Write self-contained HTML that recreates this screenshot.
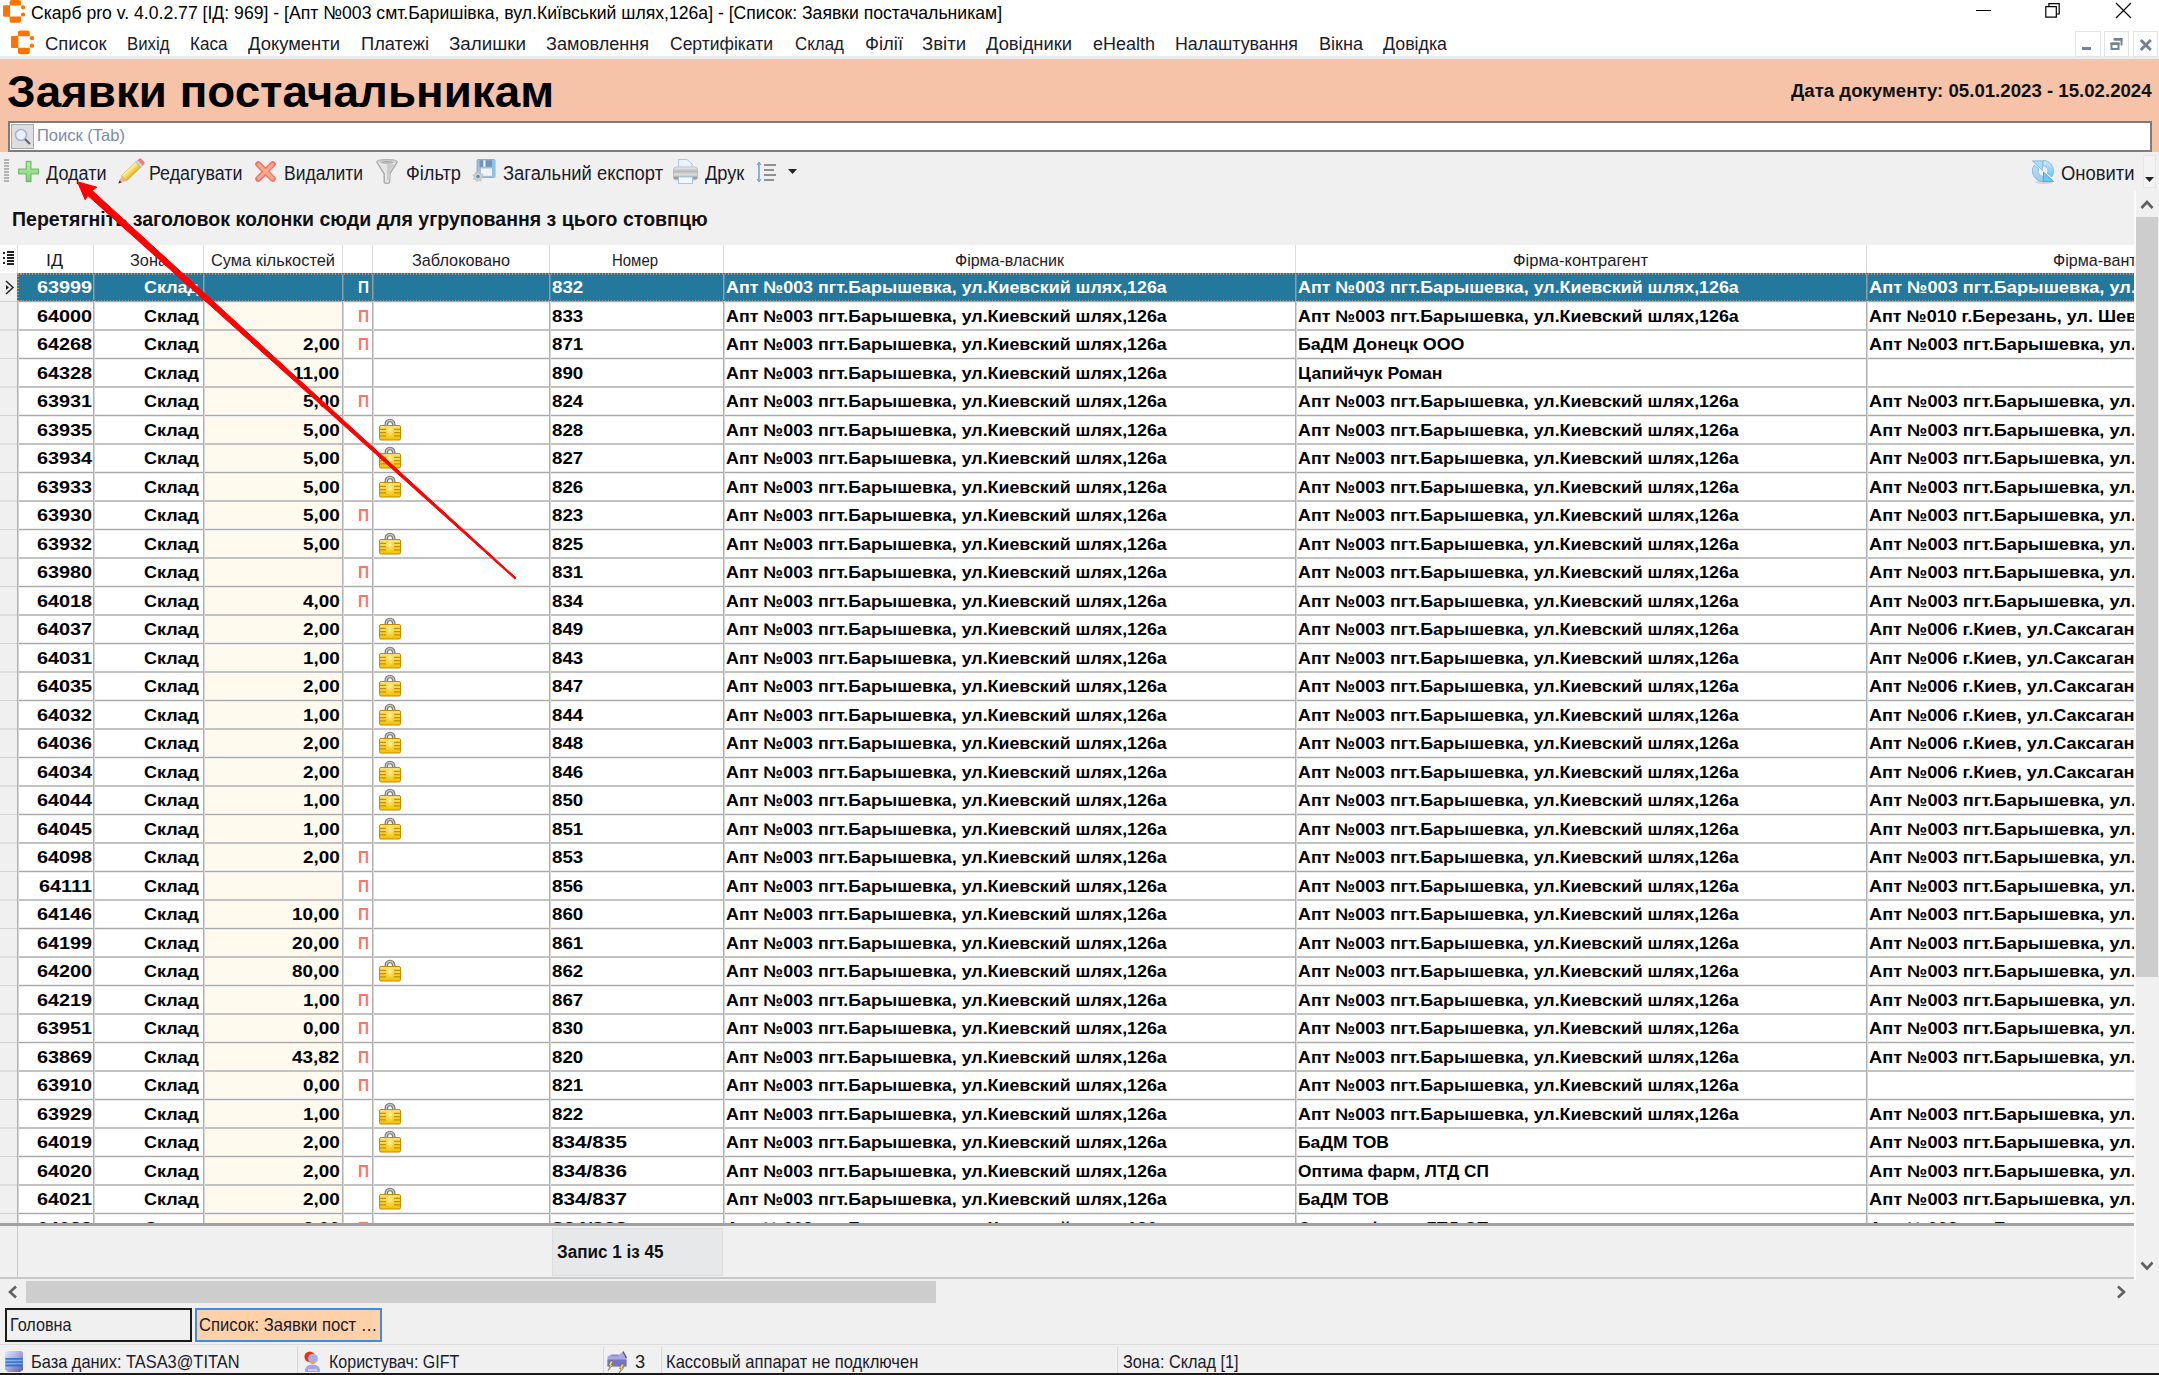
<!DOCTYPE html>
<html><head><meta charset="utf-8"><style>
html,body{margin:0;padding:0;width:2159px;height:1375px;overflow:hidden;background:#f0f0f0;position:relative}
.r{position:absolute}
.t{position:absolute;white-space:pre;line-height:0;transform-origin:0 0;font-family:"Liberation Sans",sans-serif;color:#000}
</style></head><body>
<div class="r" style="left:0px;top:0px;width:2159px;height:28px;background:#fff;"></div><svg class="r" style="left:3px;top:0px" width="22" height="23" viewBox="0 0 22 23">
<path fill="#ff7300" d="M9 0h7c1.4 0 2 .8 2 2.2v3.4H6.6V2.2C6.6.8 7.4 0 9 0zM1.2 5.2h5.8v11.6H1.2C.5 16.8 0 16.3 0 15.6V6.4c0-.7.5-1.2 1.2-1.2zM6.6 16.6H18v3.8c0 1.5-.7 2.4-2.2 2.4H8.8c-1.5 0-2.2-.9-2.2-2.4z"/>
<circle fill="#ff7300" cx="20" cy="7.3" r="2.1"/><circle fill="#ff7300" cx="20" cy="14.5" r="2.1"/></svg><div class="t" style="left:30.50px;top:13.45px;font-size:18.9px;transform:scaleX(0.9324);">Скарб pro v. 4.0.2.77 [ІД: 969] - [Апт №003 смт.Баришівка, вул.Київський шлях,126а] - [Список: Заявки постачальникам]</div><div class="r" style="left:1976px;top:10px;width:15px;height:1.2px;background:#000;"></div><svg class="r" style="left:2043px;top:1px" width="20" height="20"><path d="M2.8 5.6h10.5v10.5h-10.5z M5.9 5.6v-2.9h10.3v10.3h-2.9" fill="none" stroke="#000" stroke-width="1.2"/></svg><svg class="r" style="left:2114px;top:1px" width="20" height="20"><path d="M2 2L17 17M17 2L2 17" stroke="#000" stroke-width="1.2"/></svg><div class="r" style="left:0px;top:28px;width:2159px;height:29px;background:#fff;"></div><svg class="r" style="left:11px;top:30px" width="23" height="25" viewBox="0 0 22 23">
<path fill="#ff7300" d="M9 0h7c1.4 0 2 .8 2 2.2v3.4H6.6V2.2C6.6.8 7.4 0 9 0zM1.2 5.2h5.8v11.6H1.2C.5 16.8 0 16.3 0 15.6V6.4c0-.7.5-1.2 1.2-1.2zM6.6 16.6H18v3.8c0 1.5-.7 2.4-2.2 2.4H8.8c-1.5 0-2.2-.9-2.2-2.4z"/>
<circle fill="#ff7300" cx="20" cy="7.3" r="2.1"/><circle fill="#ff7300" cx="20" cy="14.5" r="2.1"/></svg><div class="t" style="left:44.50px;top:44.45px;font-size:18.9px;color:#1b1b2b;transform:scaleX(0.9784);">Список</div><div class="t" style="left:127.00px;top:44.45px;font-size:18.9px;color:#1b1b2b;transform:scaleX(0.8886);">Вихід</div><div class="t" style="left:190.00px;top:44.45px;font-size:18.9px;color:#1b1b2b;transform:scaleX(0.9043);">Каса</div><div class="t" style="left:248.00px;top:44.45px;font-size:18.9px;color:#1b1b2b;transform:scaleX(0.9750);">Документи</div><div class="t" style="left:361.00px;top:44.45px;font-size:18.9px;color:#1b1b2b;transform:scaleX(0.9678);">Платежі</div><div class="t" style="left:449.00px;top:44.45px;font-size:18.9px;color:#1b1b2b;transform:scaleX(0.9939);">Залишки</div><div class="t" style="left:546.00px;top:44.45px;font-size:18.9px;color:#1b1b2b;transform:scaleX(0.9569);">Замовлення</div><div class="t" style="left:670.00px;top:44.45px;font-size:18.9px;color:#1b1b2b;transform:scaleX(0.9265);">Сертифікати</div><div class="t" style="left:795.00px;top:44.45px;font-size:18.9px;color:#1b1b2b;transform:scaleX(0.8963);">Склад</div><div class="t" style="left:865.00px;top:44.45px;font-size:18.9px;color:#1b1b2b;transform:scaleX(0.9736);">Філії</div><div class="t" style="left:922.00px;top:44.45px;font-size:18.9px;color:#1b1b2b;transform:scaleX(0.9808);">Звіти</div><div class="t" style="left:986.00px;top:44.45px;font-size:18.9px;color:#1b1b2b;transform:scaleX(0.9709);">Довідники</div><div class="t" style="left:1093.00px;top:44.45px;font-size:18.9px;color:#1b1b2b;transform:scaleX(0.9520);">eHealth</div><div class="t" style="left:1175.00px;top:44.45px;font-size:18.9px;color:#1b1b2b;transform:scaleX(0.9420);">Налаштування</div><div class="t" style="left:1319.00px;top:44.45px;font-size:18.9px;color:#1b1b2b;transform:scaleX(0.9565);">Вікна</div><div class="t" style="left:1383.00px;top:44.45px;font-size:18.9px;color:#1b1b2b;transform:scaleX(0.9418);">Довідка</div><div class="r" style="left:0px;top:56px;width:2159px;height:3px;background:#ececec;"></div><div class="r" style="left:2075px;top:31px;width:25.5px;height:26px;background:#fff;border:1.5px solid #e4e4e4;box-sizing:border-box;"></div><div class="r" style="left:2103.5px;top:31px;width:25.5px;height:26px;background:#fff;border:1.5px solid #e4e4e4;box-sizing:border-box;"></div><div class="r" style="left:2132.5px;top:31px;width:25.5px;height:26px;background:#fff;border:1.5px solid #e4e4e4;box-sizing:border-box;"></div><div class="r" style="left:2082px;top:47px;width:9px;height:3px;background:#758391;"></div><svg class="r" style="left:2108px;top:36px" width="18" height="18"><path d="M3.5 7.5h7v5.5h-7z" fill="none" stroke="#758391" stroke-width="2"/><rect x="2.5" y="6.5" width="9" height="2.5" fill="#758391"/><path d="M6.5 3.5h7v6" fill="none" stroke="#758391" stroke-width="2"/><rect x="5.5" y="2" width="9" height="2.5" fill="#758391"/></svg><svg class="r" style="left:2137px;top:36px" width="18" height="18"><path d="M4.8 5L12.8 13M12.8 5L4.8 13" stroke="#758391" stroke-width="3" stroke-linecap="square"/></svg><div class="r" style="left:0px;top:59px;width:2159px;height:93px;background:#f6c2a8;"></div><div class="t" style="left:7.00px;top:91.64px;font-size:44.33px;font-weight:bold;transform:scaleX(1.0322);">Заявки постачальникам</div><div class="t" style="left:1791.40px;top:90.96px;font-size:17.44px;font-weight:bold;color:#111;transform:scaleX(1.0688);">Дата документу: 05.01.2023 - 15.02.2024</div><div class="r" style="left:8px;top:121px;width:2144px;height:31px;background:#fff;border:2px solid #7c7c7c;box-sizing:border-box;"></div><div class="r" style="left:11px;top:124px;width:23px;height:25px;background:#dedede;border:1px solid #a9a9a9;box-sizing:border-box;"></div><svg class="r" style="left:12px;top:126px" width="22" height="22"><circle cx="9" cy="9" r="5.5" fill="#e8f0ff" stroke="#a8b4c8" stroke-width="1.6"/><path d="M13 13l5 5" stroke="#6a6a6a" stroke-width="2.2"/></svg><div class="t" style="left:37.00px;top:136.21px;font-size:16.72px;color:#7d89a8;transform:scaleX(0.9889);">Поиск (Tab)</div><div class="r" style="left:0px;top:152px;width:2159px;height:1223px;background:#f0f0f0;"></div><div class="r" style="left:4px;top:159px;width:5px;height:1.6px;background:#b4b4b4;"></div><div class="r" style="left:4px;top:162px;width:5px;height:1.6px;background:#b4b4b4;"></div><div class="r" style="left:4px;top:165px;width:5px;height:1.6px;background:#b4b4b4;"></div><div class="r" style="left:4px;top:168px;width:5px;height:1.6px;background:#b4b4b4;"></div><div class="r" style="left:4px;top:171px;width:5px;height:1.6px;background:#b4b4b4;"></div><div class="r" style="left:4px;top:174px;width:5px;height:1.6px;background:#b4b4b4;"></div><div class="r" style="left:4px;top:177px;width:5px;height:1.6px;background:#b4b4b4;"></div><div class="r" style="left:4px;top:180px;width:5px;height:1.6px;background:#b4b4b4;"></div><svg class="r" style="left:17px;top:160px" width="23" height="23"><defs><linearGradient id="pg" x1="0" y1="0" x2="0" y2="1"><stop offset="0" stop-color="#b0f2aa"/><stop offset="1" stop-color="#86cc7e"/></linearGradient></defs><path d="M9.3 1.5h4.6v7.7h7.6v4.6h-7.6v7.7h-4.6v-7.7h-7.7v-4.6h7.7z" fill="url(#pg)" stroke="#74bd6c" stroke-width="1.3" stroke-linejoin="round"/></svg><div class="t" style="left:46.40px;top:173.35px;font-size:19.77px;color:#1b1b2b;transform:scaleX(0.9132);">Додати</div><svg class="r" style="left:112px;top:154px" width="36" height="36"><defs><linearGradient id="pb" x1="0" y1="0" x2="0" y2="1"><stop offset="0" stop-color="#fff8c0"/><stop offset=".45" stop-color="#fbdc55"/><stop offset="1" stop-color="#d8b038"/></linearGradient></defs><g transform="translate(6.3 29.6) rotate(-43.5)"><path d="M0 0L8 -3.7V3.7Z" fill="#f2b496"/><path d="M0 0L3.2 -1.5V1.5Z" fill="#3a3a3a"/><rect x="8" y="-3.7" width="19.5" height="7.4" fill="url(#pb)" stroke="#caa43a" stroke-width=".6"/><rect x="27.5" y="-3.7" width="2.8" height="7.4" fill="#d4d4d4" stroke="#a8a8a8" stroke-width=".5"/><path d="M30.3 -3.7h1.7a1.8 1.8 0 0 1 1.8 1.8v3.8a1.8 1.8 0 0 1-1.8 1.8h-1.7z" fill="#ee7c7c"/></g></svg><div class="t" style="left:148.90px;top:173.35px;font-size:19.77px;color:#1b1b2b;transform:scaleX(0.9031);">Редагувати</div><svg class="r" style="left:254px;top:160px" width="23" height="23"><path d="M4.2 4.2L18.8 18.8M18.8 4.2L4.2 18.8" stroke="#ec7864" stroke-width="6" stroke-linecap="round"/><path d="M4.6 4.6L18.4 18.4M18.4 4.6L4.6 18.4" stroke="#faa690" stroke-width="3" stroke-linecap="round"/></svg><div class="t" style="left:283.80px;top:173.35px;font-size:19.77px;color:#1b1b2b;transform:scaleX(0.8846);">Видалити</div><svg class="r" style="left:374px;top:157px" width="26" height="28"><path d="M2.8 5 Q3 2.6 13 2.6 Q23 2.6 23.2 5 L15.8 16.8 V24.5 Q15.6 26.3 13 26.3 Q10.2 26.3 10.2 25 V16.8 Z" fill="#e6e6e6" stroke="#a4a4a4" stroke-width="1.3" stroke-linejoin="round"/><path d="M13 7 L20.5 7.2 L15.8 15.5 V23 H13 Z" fill="#cccccc"/><ellipse cx="13" cy="5.3" rx="7" ry="1.3" fill="#9c9c9c"/><ellipse cx="13" cy="4.2" rx="9.5" ry="1.2" fill="none" stroke="#c8c8c8" stroke-width=".8"/></svg><div class="t" style="left:405.70px;top:173.35px;font-size:19.77px;color:#1b1b2b;transform:scaleX(0.9203);">Фільтр</div><svg class="r" style="left:470px;top:156px" width="28" height="28"><rect x="7" y="3.5" width="18" height="18" rx="1" fill="#a4bcd6" stroke="#8aa2c0" stroke-width=".8"/><rect x="9.5" y="4.3" width="12.5" height="6.5" fill="#6f95bd"/><rect x="13.3" y="4.3" width="2.2" height="6.5" fill="#f0f2f6"/><rect x="11" y="12.4" width="11" height="7.4" fill="#f2f2f2"/><rect x="22.3" y="4" width="2.6" height="17" fill="#88c6e6"/><g transform="translate(8 20.5)"><circle r="3.9" fill="#cdd1d5" stroke="#b0b6bc" stroke-width=".6"/><circle r="4.6" fill="none" stroke="#c4c9ce" stroke-width="1.8" stroke-dasharray="1.9 1.7"/><circle r="1.8" fill="#5f8db5"/></g></svg><div class="t" style="left:502.50px;top:173.35px;font-size:19.77px;color:#1b1b2b;transform:scaleX(0.9304);">Загальний експорт</div><svg class="r" style="left:672px;top:158px" width="27" height="27"><defs><linearGradient id="prg" x1="0" y1="0" x2="0" y2="1"><stop offset="0" stop-color="#f0f0f0"/><stop offset=".35" stop-color="#b8b8b8"/><stop offset=".6" stop-color="#e0e0e0"/><stop offset=".85" stop-color="#909090"/><stop offset="1" stop-color="#d0d0d0"/></linearGradient></defs><path d="M6.5 1.5h8.5l5 4.5v5h-13.5z" fill="#eaf4ff" stroke="#a6c6ee" stroke-width="1"/><rect x="1.5" y="9" width="24" height="13" rx="3" fill="url(#prg)" stroke="#b4b4b4" stroke-width=".8"/><rect x="6.5" y="19" width="14" height="6.5" fill="#f4f9ff" stroke="#a6c6ee" stroke-width="1"/></svg><div class="t" style="left:704.70px;top:173.35px;font-size:19.77px;color:#1b1b2b;transform:scaleX(0.9206);">Друк</div><svg class="r" style="left:756px;top:161px" width="21" height="22"><path d="M3 2v18" stroke="#6a9ad8" stroke-width="1.5"/><path d="M1 4l2-3 2 3M1 18l2 3 2-3" fill="none" stroke="#6a9ad8"/><path d="M8 4h12M8 9h10M8 14h12M8 19h10" stroke="#707070" stroke-width="1.5"/></svg><svg class="r" style="left:788px;top:169px" width="10" height="6"><path d="M0 0h9l-4.5 5z" fill="#222"/></svg><svg class="r" style="left:2030px;top:158px" width="26" height="27"><defs><linearGradient id="rg1" x1="0" y1="0" x2="0" y2="1"><stop offset="0" stop-color="#b4e2fc"/><stop offset="1" stop-color="#9ccbef"/></linearGradient><linearGradient id="rg2" x1="0" y1="0" x2="0" y2="1"><stop offset="0" stop-color="#d4e8f6"/><stop offset="1" stop-color="#62c4f6"/></linearGradient></defs><ellipse cx="14" cy="24.3" rx="9" ry="1.6" fill="#c8c8c8" opacity=".7"/><path d="M13 23.6A10.6 10.6 0 0 1 4.2 7.2L8.6 10.6A5.4 5.4 0 0 0 13 18.4Z" fill="url(#rg1)" stroke="#86b4e0" stroke-width=".9"/><path d="M2.3 2.9H12.7V12.4Z" fill="#aadcfb" stroke="#86b4e0" stroke-width=".9" stroke-linejoin="round"/><path d="M13 2.4A10.6 10.6 0 0 1 21.8 18.8L17.4 15.4A5.4 5.4 0 0 0 13 7.6Z" fill="url(#rg2)" stroke="#8ab8e0" stroke-width=".9"/><path d="M13.5 14V23.6H23.7Z" fill="#66c8f8" stroke="#6a9ccc" stroke-width=".9" stroke-linejoin="round"/></svg><div class="t" style="left:2060.50px;top:173.35px;font-size:19.77px;color:#1b1b2b;transform:scaleX(0.9313);">Оновити</div><div class="r" style="left:2143px;top:155px;width:13px;height:33px;background:#f3f3f3;border:1px solid #e6e6e6;box-sizing:border-box;"></div><svg class="r" style="left:2145px;top:177px" width="10" height="6"><path d="M0 0h9l-4.5 5z" fill="#222"/></svg><div class="t" style="left:12.40px;top:218.95px;font-size:20.35px;font-weight:bold;color:#111;transform:scaleX(0.9604);">Перетягніть заголовок колонки сюди для угруповання з цього стовпцю</div><div class="r" style="left:0px;top:245px;width:2134px;height:979px;background:#fff;"></div><div class="r" style="left:204px;top:273px;width:138px;height:951px;background:#fff9ee;"></div><div class="r" style="left:0px;top:245px;width:17px;height:979px;background:#f0f0f0;"></div><div class="r" style="left:0px;top:245px;width:17px;height:28px;background:#fff;"></div><div class="r" style="left:0;top:245px;width:2134px;height:979px;overflow:hidden"><div class="r" style="left:0;top:-245px;width:2159px;height:1375px"><div class="r" style="left:18px;top:301px;width:2116px;height:1px;background:#a8a8a8;"></div><div class="r" style="left:18px;top:300px;width:2116px;height:1px;background:#ececec;"></div><div class="r" style="left:18px;top:302px;width:2116px;height:1px;background:#ececec;"></div><div class="r" style="left:0px;top:301px;width:17px;height:1px;background:#d4d4d4;"></div><div class="r" style="left:18px;top:329px;width:2116px;height:2px;background:#c2c2c2;"></div><div class="r" style="left:0px;top:329px;width:17px;height:2px;background:#dedede;"></div><div class="r" style="left:18px;top:358px;width:2116px;height:1px;background:#a8a8a8;"></div><div class="r" style="left:18px;top:357px;width:2116px;height:1px;background:#ececec;"></div><div class="r" style="left:18px;top:359px;width:2116px;height:1px;background:#ececec;"></div><div class="r" style="left:0px;top:358px;width:17px;height:1px;background:#d4d4d4;"></div><div class="r" style="left:18px;top:386px;width:2116px;height:2px;background:#c2c2c2;"></div><div class="r" style="left:0px;top:386px;width:17px;height:2px;background:#dedede;"></div><div class="r" style="left:18px;top:415px;width:2116px;height:1px;background:#a8a8a8;"></div><div class="r" style="left:18px;top:414px;width:2116px;height:1px;background:#ececec;"></div><div class="r" style="left:18px;top:416px;width:2116px;height:1px;background:#ececec;"></div><div class="r" style="left:0px;top:415px;width:17px;height:1px;background:#d4d4d4;"></div><div class="r" style="left:18px;top:443px;width:2116px;height:2px;background:#c2c2c2;"></div><div class="r" style="left:0px;top:443px;width:17px;height:2px;background:#dedede;"></div><div class="r" style="left:18px;top:472px;width:2116px;height:1px;background:#a8a8a8;"></div><div class="r" style="left:18px;top:471px;width:2116px;height:1px;background:#ececec;"></div><div class="r" style="left:18px;top:473px;width:2116px;height:1px;background:#ececec;"></div><div class="r" style="left:0px;top:472px;width:17px;height:1px;background:#d4d4d4;"></div><div class="r" style="left:18px;top:500px;width:2116px;height:2px;background:#c2c2c2;"></div><div class="r" style="left:0px;top:500px;width:17px;height:2px;background:#dedede;"></div><div class="r" style="left:18px;top:529px;width:2116px;height:1px;background:#a8a8a8;"></div><div class="r" style="left:18px;top:528px;width:2116px;height:1px;background:#ececec;"></div><div class="r" style="left:18px;top:530px;width:2116px;height:1px;background:#ececec;"></div><div class="r" style="left:0px;top:529px;width:17px;height:1px;background:#d4d4d4;"></div><div class="r" style="left:18px;top:557px;width:2116px;height:2px;background:#c2c2c2;"></div><div class="r" style="left:0px;top:557px;width:17px;height:2px;background:#dedede;"></div><div class="r" style="left:18px;top:586px;width:2116px;height:1px;background:#a8a8a8;"></div><div class="r" style="left:18px;top:585px;width:2116px;height:1px;background:#ececec;"></div><div class="r" style="left:18px;top:587px;width:2116px;height:1px;background:#ececec;"></div><div class="r" style="left:0px;top:586px;width:17px;height:1px;background:#d4d4d4;"></div><div class="r" style="left:18px;top:614px;width:2116px;height:2px;background:#c2c2c2;"></div><div class="r" style="left:0px;top:614px;width:17px;height:2px;background:#dedede;"></div><div class="r" style="left:18px;top:643px;width:2116px;height:1px;background:#a8a8a8;"></div><div class="r" style="left:18px;top:642px;width:2116px;height:1px;background:#ececec;"></div><div class="r" style="left:18px;top:644px;width:2116px;height:1px;background:#ececec;"></div><div class="r" style="left:0px;top:643px;width:17px;height:1px;background:#d4d4d4;"></div><div class="r" style="left:18px;top:671px;width:2116px;height:2px;background:#c2c2c2;"></div><div class="r" style="left:0px;top:671px;width:17px;height:2px;background:#dedede;"></div><div class="r" style="left:18px;top:700px;width:2116px;height:1px;background:#a8a8a8;"></div><div class="r" style="left:18px;top:699px;width:2116px;height:1px;background:#ececec;"></div><div class="r" style="left:18px;top:701px;width:2116px;height:1px;background:#ececec;"></div><div class="r" style="left:0px;top:700px;width:17px;height:1px;background:#d4d4d4;"></div><div class="r" style="left:18px;top:728px;width:2116px;height:2px;background:#c2c2c2;"></div><div class="r" style="left:0px;top:728px;width:17px;height:2px;background:#dedede;"></div><div class="r" style="left:18px;top:757px;width:2116px;height:1px;background:#a8a8a8;"></div><div class="r" style="left:18px;top:756px;width:2116px;height:1px;background:#ececec;"></div><div class="r" style="left:18px;top:758px;width:2116px;height:1px;background:#ececec;"></div><div class="r" style="left:0px;top:757px;width:17px;height:1px;background:#d4d4d4;"></div><div class="r" style="left:18px;top:785px;width:2116px;height:2px;background:#c2c2c2;"></div><div class="r" style="left:0px;top:785px;width:17px;height:2px;background:#dedede;"></div><div class="r" style="left:18px;top:814px;width:2116px;height:1px;background:#a8a8a8;"></div><div class="r" style="left:18px;top:813px;width:2116px;height:1px;background:#ececec;"></div><div class="r" style="left:18px;top:815px;width:2116px;height:1px;background:#ececec;"></div><div class="r" style="left:0px;top:814px;width:17px;height:1px;background:#d4d4d4;"></div><div class="r" style="left:18px;top:842px;width:2116px;height:2px;background:#c2c2c2;"></div><div class="r" style="left:0px;top:842px;width:17px;height:2px;background:#dedede;"></div><div class="r" style="left:18px;top:871px;width:2116px;height:1px;background:#a8a8a8;"></div><div class="r" style="left:18px;top:870px;width:2116px;height:1px;background:#ececec;"></div><div class="r" style="left:18px;top:872px;width:2116px;height:1px;background:#ececec;"></div><div class="r" style="left:0px;top:871px;width:17px;height:1px;background:#d4d4d4;"></div><div class="r" style="left:18px;top:899px;width:2116px;height:2px;background:#c2c2c2;"></div><div class="r" style="left:0px;top:899px;width:17px;height:2px;background:#dedede;"></div><div class="r" style="left:18px;top:928px;width:2116px;height:1px;background:#a8a8a8;"></div><div class="r" style="left:18px;top:927px;width:2116px;height:1px;background:#ececec;"></div><div class="r" style="left:18px;top:929px;width:2116px;height:1px;background:#ececec;"></div><div class="r" style="left:0px;top:928px;width:17px;height:1px;background:#d4d4d4;"></div><div class="r" style="left:18px;top:956px;width:2116px;height:2px;background:#c2c2c2;"></div><div class="r" style="left:0px;top:956px;width:17px;height:2px;background:#dedede;"></div><div class="r" style="left:18px;top:985px;width:2116px;height:1px;background:#a8a8a8;"></div><div class="r" style="left:18px;top:984px;width:2116px;height:1px;background:#ececec;"></div><div class="r" style="left:18px;top:986px;width:2116px;height:1px;background:#ececec;"></div><div class="r" style="left:0px;top:985px;width:17px;height:1px;background:#d4d4d4;"></div><div class="r" style="left:18px;top:1013px;width:2116px;height:2px;background:#c2c2c2;"></div><div class="r" style="left:0px;top:1013px;width:17px;height:2px;background:#dedede;"></div><div class="r" style="left:18px;top:1042px;width:2116px;height:1px;background:#a8a8a8;"></div><div class="r" style="left:18px;top:1041px;width:2116px;height:1px;background:#ececec;"></div><div class="r" style="left:18px;top:1043px;width:2116px;height:1px;background:#ececec;"></div><div class="r" style="left:0px;top:1042px;width:17px;height:1px;background:#d4d4d4;"></div><div class="r" style="left:18px;top:1070px;width:2116px;height:2px;background:#c2c2c2;"></div><div class="r" style="left:0px;top:1070px;width:17px;height:2px;background:#dedede;"></div><div class="r" style="left:18px;top:1099px;width:2116px;height:1px;background:#a8a8a8;"></div><div class="r" style="left:18px;top:1098px;width:2116px;height:1px;background:#ececec;"></div><div class="r" style="left:18px;top:1100px;width:2116px;height:1px;background:#ececec;"></div><div class="r" style="left:0px;top:1099px;width:17px;height:1px;background:#d4d4d4;"></div><div class="r" style="left:18px;top:1127px;width:2116px;height:2px;background:#c2c2c2;"></div><div class="r" style="left:0px;top:1127px;width:17px;height:2px;background:#dedede;"></div><div class="r" style="left:18px;top:1156px;width:2116px;height:1px;background:#a8a8a8;"></div><div class="r" style="left:18px;top:1155px;width:2116px;height:1px;background:#ececec;"></div><div class="r" style="left:18px;top:1157px;width:2116px;height:1px;background:#ececec;"></div><div class="r" style="left:0px;top:1156px;width:17px;height:1px;background:#d4d4d4;"></div><div class="r" style="left:18px;top:1184px;width:2116px;height:2px;background:#c2c2c2;"></div><div class="r" style="left:0px;top:1184px;width:17px;height:2px;background:#dedede;"></div><div class="r" style="left:18px;top:1213px;width:2116px;height:1px;background:#a8a8a8;"></div><div class="r" style="left:18px;top:1212px;width:2116px;height:1px;background:#ececec;"></div><div class="r" style="left:18px;top:1214px;width:2116px;height:1px;background:#ececec;"></div><div class="r" style="left:0px;top:1213px;width:17px;height:1px;background:#d4d4d4;"></div><div class="r" style="left:93px;top:273px;width:1px;height:951px;background:#b0b0b0;"></div><div class="r" style="left:94px;top:273px;width:1px;height:951px;background:#d6d6d6;"></div><div class="r" style="left:203px;top:273px;width:1px;height:951px;background:#b0b0b0;"></div><div class="r" style="left:204px;top:273px;width:1px;height:951px;background:#d6d6d6;"></div><div class="r" style="left:342px;top:273px;width:1px;height:951px;background:#b0b0b0;"></div><div class="r" style="left:343px;top:273px;width:1px;height:951px;background:#d6d6d6;"></div><div class="r" style="left:372px;top:273px;width:1px;height:951px;background:#b0b0b0;"></div><div class="r" style="left:373px;top:273px;width:1px;height:951px;background:#d6d6d6;"></div><div class="r" style="left:549px;top:273px;width:1px;height:951px;background:#b0b0b0;"></div><div class="r" style="left:550px;top:273px;width:1px;height:951px;background:#d6d6d6;"></div><div class="r" style="left:723px;top:273px;width:1px;height:951px;background:#b0b0b0;"></div><div class="r" style="left:724px;top:273px;width:1px;height:951px;background:#d6d6d6;"></div><div class="r" style="left:1295px;top:273px;width:1px;height:951px;background:#b0b0b0;"></div><div class="r" style="left:1296px;top:273px;width:1px;height:951px;background:#d6d6d6;"></div><div class="r" style="left:1866px;top:273px;width:1px;height:951px;background:#b0b0b0;"></div><div class="r" style="left:1867px;top:273px;width:1px;height:951px;background:#d6d6d6;"></div><div class="r" style="left:17px;top:273px;width:1px;height:951px;background:#b0b0b0;"></div><div class="r" style="left:18px;top:273px;width:1px;height:951px;background:#d6d6d6;"></div><div class="r" style="left:17px;top:273px;width:2117px;height:28px;background:#24789c;"></div><div class="r" style="left:93px;top:274px;width:1px;height:26px;background:#8a9ea8;"></div><div class="r" style="left:94px;top:274px;width:1px;height:26px;background:#5a8ca4;"></div><div class="r" style="left:203px;top:274px;width:1px;height:26px;background:#8a9ea8;"></div><div class="r" style="left:204px;top:274px;width:1px;height:26px;background:#5a8ca4;"></div><div class="r" style="left:342px;top:274px;width:1px;height:26px;background:#8a9ea8;"></div><div class="r" style="left:343px;top:274px;width:1px;height:26px;background:#5a8ca4;"></div><div class="r" style="left:372px;top:274px;width:1px;height:26px;background:#8a9ea8;"></div><div class="r" style="left:373px;top:274px;width:1px;height:26px;background:#5a8ca4;"></div><div class="r" style="left:549px;top:274px;width:1px;height:26px;background:#8a9ea8;"></div><div class="r" style="left:550px;top:274px;width:1px;height:26px;background:#5a8ca4;"></div><div class="r" style="left:723px;top:274px;width:1px;height:26px;background:#8a9ea8;"></div><div class="r" style="left:724px;top:274px;width:1px;height:26px;background:#5a8ca4;"></div><div class="r" style="left:1295px;top:274px;width:1px;height:26px;background:#8a9ea8;"></div><div class="r" style="left:1296px;top:274px;width:1px;height:26px;background:#5a8ca4;"></div><div class="r" style="left:1866px;top:274px;width:1px;height:26px;background:#8a9ea8;"></div><div class="r" style="left:1867px;top:274px;width:1px;height:26px;background:#5a8ca4;"></div><div class="r" style="left:17px;top:273px;width:2117px;height:1.5px;background:repeating-linear-gradient(90deg,rgba(225,140,90,.85) 0 1.5px,transparent 1.5px 3px);"></div><div class="r" style="left:17px;top:299.5px;width:2117px;height:1.5px;background:repeating-linear-gradient(90deg,rgba(225,140,90,.85) 0 1.5px,transparent 1.5px 3px);"></div><div class="r" style="left:17px;top:273px;width:1.5px;height:28px;background:repeating-linear-gradient(180deg,rgba(225,140,90,.85) 0 1.5px,transparent 1.5px 3px);"></div><div class="t" style="left:36.88px;top:288.21px;font-size:16.72px;font-weight:bold;color:#fff;transform:scaleX(1.1866);">63999</div><div class="t" style="left:144.02px;top:288.21px;font-size:16.72px;font-weight:bold;color:#fff;transform:scaleX(1.0750);">Склад</div><div class="t" style="left:357.50px;top:288.21px;font-size:16.72px;font-weight:bold;color:#fff;transform:scaleX(0.9155);">П</div><div class="t" style="left:552.20px;top:288.21px;font-size:16.72px;font-weight:bold;color:#fff;transform:scaleX(1.1194);">832</div><div class="t" style="left:726.30px;top:288.21px;font-size:16.72px;font-weight:bold;color:#fff;transform:scaleX(1.0678);">Апт №003 пгт.Барышевка, ул.Киевский шлях,126а</div><div class="t" style="left:1298.00px;top:288.21px;font-size:16.72px;font-weight:bold;color:#fff;transform:scaleX(1.0678);">Апт №003 пгт.Барышевка, ул.Киевский шлях,126а</div><div class="t" style="left:1869.30px;top:288.21px;font-size:16.72px;font-weight:bold;color:#fff;transform:scaleX(1.0898);">Апт №003 пгт.Барышевка, ул.</div><div class="t" style="left:36.88px;top:317.21px;font-size:16.72px;font-weight:bold;transform:scaleX(1.1866);">64000</div><div class="t" style="left:144.02px;top:317.21px;font-size:16.72px;font-weight:bold;transform:scaleX(1.0750);">Склад</div><div class="t" style="left:357.50px;top:317.21px;font-size:16.72px;font-weight:bold;color:#ff7468;transform:scaleX(0.9155);">П</div><div class="t" style="left:552.20px;top:317.21px;font-size:16.72px;font-weight:bold;transform:scaleX(1.1194);">833</div><div class="t" style="left:726.30px;top:317.21px;font-size:16.72px;font-weight:bold;transform:scaleX(1.0678);">Апт №003 пгт.Барышевка, ул.Киевский шлях,126а</div><div class="t" style="left:1298.00px;top:317.21px;font-size:16.72px;font-weight:bold;transform:scaleX(1.0678);">Апт №003 пгт.Барышевка, ул.Киевский шлях,126а</div><div class="t" style="left:1869.30px;top:317.21px;font-size:16.72px;font-weight:bold;transform:scaleX(1.0757);">Апт №010 г.Березань, ул. Шев</div><div class="t" style="left:36.88px;top:345.21px;font-size:16.72px;font-weight:bold;transform:scaleX(1.1866);">64268</div><div class="t" style="left:144.02px;top:345.21px;font-size:16.72px;font-weight:bold;transform:scaleX(1.0750);">Склад</div><div class="t" style="left:302.76px;top:345.21px;font-size:16.72px;font-weight:bold;transform:scaleX(1.1300);">2,00</div><div class="t" style="left:357.50px;top:345.21px;font-size:16.72px;font-weight:bold;color:#ff7468;transform:scaleX(0.9155);">П</div><div class="t" style="left:552.20px;top:345.21px;font-size:16.72px;font-weight:bold;transform:scaleX(1.1194);">871</div><div class="t" style="left:726.30px;top:345.21px;font-size:16.72px;font-weight:bold;transform:scaleX(1.0678);">Апт №003 пгт.Барышевка, ул.Киевский шлях,126а</div><div class="t" style="left:1298.00px;top:345.21px;font-size:16.72px;font-weight:bold;transform:scaleX(1.0695);">БаДМ Донецк ООО</div><div class="t" style="left:1869.30px;top:345.21px;font-size:16.72px;font-weight:bold;transform:scaleX(1.0898);">Апт №003 пгт.Барышевка, ул.</div><div class="t" style="left:36.88px;top:374.21px;font-size:16.72px;font-weight:bold;transform:scaleX(1.1866);">64328</div><div class="t" style="left:144.02px;top:374.21px;font-size:16.72px;font-weight:bold;transform:scaleX(1.0750);">Склад</div><div class="t" style="left:293.29px;top:374.21px;font-size:16.72px;font-weight:bold;transform:scaleX(1.1300);">11,00</div><div class="t" style="left:552.20px;top:374.21px;font-size:16.72px;font-weight:bold;transform:scaleX(1.1194);">890</div><div class="t" style="left:726.30px;top:374.21px;font-size:16.72px;font-weight:bold;transform:scaleX(1.0678);">Апт №003 пгт.Барышевка, ул.Киевский шлях,126а</div><div class="t" style="left:1298.00px;top:374.21px;font-size:16.72px;font-weight:bold;transform:scaleX(1.0551);">Цапийчук Роман</div><div class="t" style="left:36.88px;top:402.21px;font-size:16.72px;font-weight:bold;transform:scaleX(1.1866);">63931</div><div class="t" style="left:144.02px;top:402.21px;font-size:16.72px;font-weight:bold;transform:scaleX(1.0750);">Склад</div><div class="t" style="left:302.76px;top:402.21px;font-size:16.72px;font-weight:bold;transform:scaleX(1.1300);">5,00</div><div class="t" style="left:357.50px;top:402.21px;font-size:16.72px;font-weight:bold;color:#ff7468;transform:scaleX(0.9155);">П</div><div class="t" style="left:552.20px;top:402.21px;font-size:16.72px;font-weight:bold;transform:scaleX(1.1194);">824</div><div class="t" style="left:726.30px;top:402.21px;font-size:16.72px;font-weight:bold;transform:scaleX(1.0678);">Апт №003 пгт.Барышевка, ул.Киевский шлях,126а</div><div class="t" style="left:1298.00px;top:402.21px;font-size:16.72px;font-weight:bold;transform:scaleX(1.0678);">Апт №003 пгт.Барышевка, ул.Киевский шлях,126а</div><div class="t" style="left:1869.30px;top:402.21px;font-size:16.72px;font-weight:bold;transform:scaleX(1.0898);">Апт №003 пгт.Барышевка, ул.</div><div class="t" style="left:36.88px;top:431.21px;font-size:16.72px;font-weight:bold;transform:scaleX(1.1866);">63935</div><div class="t" style="left:144.02px;top:431.21px;font-size:16.72px;font-weight:bold;transform:scaleX(1.0750);">Склад</div><div class="t" style="left:302.76px;top:431.21px;font-size:16.72px;font-weight:bold;transform:scaleX(1.1300);">5,00</div><svg class="r" style="left:379px;top:418px" width="22" height="23" viewBox="0 0 22 23"><defs><linearGradient id="lg" x1="0" y1="0" x2="0" y2="1"><stop offset="0" stop-color="#fbe37a"/><stop offset="1" stop-color="#f2c200"/></linearGradient><radialGradient id="lh" cx=".5" cy=".35" r=".6"><stop offset="0" stop-color="#fff6b8"/><stop offset="1" stop-color="#f4cc20" stop-opacity="0"/></radialGradient></defs><path d="M7.3 9.5V6.2a3.7 3.7 0 0 1 7.4 0V9.5" fill="none" stroke="#7a7a7a" stroke-width="3.6"/><path d="M7.3 9V6.2a3.7 3.7 0 0 1 7.4 0V9" fill="none" stroke="#c4c4c4" stroke-width="1.4"/><rect x="0.5" y="7.5" width="21" height="14.5" rx="1.5" fill="url(#lg)" stroke="#c08c00" stroke-width="1"/><path d="M1 11.3h6M15 11.3h6M1 14.6h6M15 14.6h6M1 17.9h6M15 17.9h6" stroke="#c89000" stroke-width="1.3"/><rect x="6.5" y="8" width="9" height="13.5" fill="url(#lh)"/></svg><div class="t" style="left:552.20px;top:431.21px;font-size:16.72px;font-weight:bold;transform:scaleX(1.1194);">828</div><div class="t" style="left:726.30px;top:431.21px;font-size:16.72px;font-weight:bold;transform:scaleX(1.0678);">Апт №003 пгт.Барышевка, ул.Киевский шлях,126а</div><div class="t" style="left:1298.00px;top:431.21px;font-size:16.72px;font-weight:bold;transform:scaleX(1.0678);">Апт №003 пгт.Барышевка, ул.Киевский шлях,126а</div><div class="t" style="left:1869.30px;top:431.21px;font-size:16.72px;font-weight:bold;transform:scaleX(1.0898);">Апт №003 пгт.Барышевка, ул.</div><div class="t" style="left:36.88px;top:459.21px;font-size:16.72px;font-weight:bold;transform:scaleX(1.1866);">63934</div><div class="t" style="left:144.02px;top:459.21px;font-size:16.72px;font-weight:bold;transform:scaleX(1.0750);">Склад</div><div class="t" style="left:302.76px;top:459.21px;font-size:16.72px;font-weight:bold;transform:scaleX(1.1300);">5,00</div><svg class="r" style="left:379px;top:446px" width="22" height="23" viewBox="0 0 22 23"><defs><linearGradient id="lg" x1="0" y1="0" x2="0" y2="1"><stop offset="0" stop-color="#fbe37a"/><stop offset="1" stop-color="#f2c200"/></linearGradient><radialGradient id="lh" cx=".5" cy=".35" r=".6"><stop offset="0" stop-color="#fff6b8"/><stop offset="1" stop-color="#f4cc20" stop-opacity="0"/></radialGradient></defs><path d="M7.3 9.5V6.2a3.7 3.7 0 0 1 7.4 0V9.5" fill="none" stroke="#7a7a7a" stroke-width="3.6"/><path d="M7.3 9V6.2a3.7 3.7 0 0 1 7.4 0V9" fill="none" stroke="#c4c4c4" stroke-width="1.4"/><rect x="0.5" y="7.5" width="21" height="14.5" rx="1.5" fill="url(#lg)" stroke="#c08c00" stroke-width="1"/><path d="M1 11.3h6M15 11.3h6M1 14.6h6M15 14.6h6M1 17.9h6M15 17.9h6" stroke="#c89000" stroke-width="1.3"/><rect x="6.5" y="8" width="9" height="13.5" fill="url(#lh)"/></svg><div class="t" style="left:552.20px;top:459.21px;font-size:16.72px;font-weight:bold;transform:scaleX(1.1194);">827</div><div class="t" style="left:726.30px;top:459.21px;font-size:16.72px;font-weight:bold;transform:scaleX(1.0678);">Апт №003 пгт.Барышевка, ул.Киевский шлях,126а</div><div class="t" style="left:1298.00px;top:459.21px;font-size:16.72px;font-weight:bold;transform:scaleX(1.0678);">Апт №003 пгт.Барышевка, ул.Киевский шлях,126а</div><div class="t" style="left:1869.30px;top:459.21px;font-size:16.72px;font-weight:bold;transform:scaleX(1.0898);">Апт №003 пгт.Барышевка, ул.</div><div class="t" style="left:36.88px;top:488.21px;font-size:16.72px;font-weight:bold;transform:scaleX(1.1866);">63933</div><div class="t" style="left:144.02px;top:488.21px;font-size:16.72px;font-weight:bold;transform:scaleX(1.0750);">Склад</div><div class="t" style="left:302.76px;top:488.21px;font-size:16.72px;font-weight:bold;transform:scaleX(1.1300);">5,00</div><svg class="r" style="left:379px;top:475px" width="22" height="23" viewBox="0 0 22 23"><defs><linearGradient id="lg" x1="0" y1="0" x2="0" y2="1"><stop offset="0" stop-color="#fbe37a"/><stop offset="1" stop-color="#f2c200"/></linearGradient><radialGradient id="lh" cx=".5" cy=".35" r=".6"><stop offset="0" stop-color="#fff6b8"/><stop offset="1" stop-color="#f4cc20" stop-opacity="0"/></radialGradient></defs><path d="M7.3 9.5V6.2a3.7 3.7 0 0 1 7.4 0V9.5" fill="none" stroke="#7a7a7a" stroke-width="3.6"/><path d="M7.3 9V6.2a3.7 3.7 0 0 1 7.4 0V9" fill="none" stroke="#c4c4c4" stroke-width="1.4"/><rect x="0.5" y="7.5" width="21" height="14.5" rx="1.5" fill="url(#lg)" stroke="#c08c00" stroke-width="1"/><path d="M1 11.3h6M15 11.3h6M1 14.6h6M15 14.6h6M1 17.9h6M15 17.9h6" stroke="#c89000" stroke-width="1.3"/><rect x="6.5" y="8" width="9" height="13.5" fill="url(#lh)"/></svg><div class="t" style="left:552.20px;top:488.21px;font-size:16.72px;font-weight:bold;transform:scaleX(1.1194);">826</div><div class="t" style="left:726.30px;top:488.21px;font-size:16.72px;font-weight:bold;transform:scaleX(1.0678);">Апт №003 пгт.Барышевка, ул.Киевский шлях,126а</div><div class="t" style="left:1298.00px;top:488.21px;font-size:16.72px;font-weight:bold;transform:scaleX(1.0678);">Апт №003 пгт.Барышевка, ул.Киевский шлях,126а</div><div class="t" style="left:1869.30px;top:488.21px;font-size:16.72px;font-weight:bold;transform:scaleX(1.0898);">Апт №003 пгт.Барышевка, ул.</div><div class="t" style="left:36.88px;top:516.21px;font-size:16.72px;font-weight:bold;transform:scaleX(1.1866);">63930</div><div class="t" style="left:144.02px;top:516.21px;font-size:16.72px;font-weight:bold;transform:scaleX(1.0750);">Склад</div><div class="t" style="left:302.76px;top:516.21px;font-size:16.72px;font-weight:bold;transform:scaleX(1.1300);">5,00</div><div class="t" style="left:357.50px;top:516.21px;font-size:16.72px;font-weight:bold;color:#ff7468;transform:scaleX(0.9155);">П</div><div class="t" style="left:552.20px;top:516.21px;font-size:16.72px;font-weight:bold;transform:scaleX(1.1194);">823</div><div class="t" style="left:726.30px;top:516.21px;font-size:16.72px;font-weight:bold;transform:scaleX(1.0678);">Апт №003 пгт.Барышевка, ул.Киевский шлях,126а</div><div class="t" style="left:1298.00px;top:516.21px;font-size:16.72px;font-weight:bold;transform:scaleX(1.0678);">Апт №003 пгт.Барышевка, ул.Киевский шлях,126а</div><div class="t" style="left:1869.30px;top:516.21px;font-size:16.72px;font-weight:bold;transform:scaleX(1.0898);">Апт №003 пгт.Барышевка, ул.</div><div class="t" style="left:36.88px;top:545.21px;font-size:16.72px;font-weight:bold;transform:scaleX(1.1866);">63932</div><div class="t" style="left:144.02px;top:545.21px;font-size:16.72px;font-weight:bold;transform:scaleX(1.0750);">Склад</div><div class="t" style="left:302.76px;top:545.21px;font-size:16.72px;font-weight:bold;transform:scaleX(1.1300);">5,00</div><svg class="r" style="left:379px;top:532px" width="22" height="23" viewBox="0 0 22 23"><defs><linearGradient id="lg" x1="0" y1="0" x2="0" y2="1"><stop offset="0" stop-color="#fbe37a"/><stop offset="1" stop-color="#f2c200"/></linearGradient><radialGradient id="lh" cx=".5" cy=".35" r=".6"><stop offset="0" stop-color="#fff6b8"/><stop offset="1" stop-color="#f4cc20" stop-opacity="0"/></radialGradient></defs><path d="M7.3 9.5V6.2a3.7 3.7 0 0 1 7.4 0V9.5" fill="none" stroke="#7a7a7a" stroke-width="3.6"/><path d="M7.3 9V6.2a3.7 3.7 0 0 1 7.4 0V9" fill="none" stroke="#c4c4c4" stroke-width="1.4"/><rect x="0.5" y="7.5" width="21" height="14.5" rx="1.5" fill="url(#lg)" stroke="#c08c00" stroke-width="1"/><path d="M1 11.3h6M15 11.3h6M1 14.6h6M15 14.6h6M1 17.9h6M15 17.9h6" stroke="#c89000" stroke-width="1.3"/><rect x="6.5" y="8" width="9" height="13.5" fill="url(#lh)"/></svg><div class="t" style="left:552.20px;top:545.21px;font-size:16.72px;font-weight:bold;transform:scaleX(1.1194);">825</div><div class="t" style="left:726.30px;top:545.21px;font-size:16.72px;font-weight:bold;transform:scaleX(1.0678);">Апт №003 пгт.Барышевка, ул.Киевский шлях,126а</div><div class="t" style="left:1298.00px;top:545.21px;font-size:16.72px;font-weight:bold;transform:scaleX(1.0678);">Апт №003 пгт.Барышевка, ул.Киевский шлях,126а</div><div class="t" style="left:1869.30px;top:545.21px;font-size:16.72px;font-weight:bold;transform:scaleX(1.0898);">Апт №003 пгт.Барышевка, ул.</div><div class="t" style="left:36.88px;top:573.21px;font-size:16.72px;font-weight:bold;transform:scaleX(1.1866);">63980</div><div class="t" style="left:144.02px;top:573.21px;font-size:16.72px;font-weight:bold;transform:scaleX(1.0750);">Склад</div><div class="t" style="left:357.50px;top:573.21px;font-size:16.72px;font-weight:bold;color:#ff7468;transform:scaleX(0.9155);">П</div><div class="t" style="left:552.20px;top:573.21px;font-size:16.72px;font-weight:bold;transform:scaleX(1.1194);">831</div><div class="t" style="left:726.30px;top:573.21px;font-size:16.72px;font-weight:bold;transform:scaleX(1.0678);">Апт №003 пгт.Барышевка, ул.Киевский шлях,126а</div><div class="t" style="left:1298.00px;top:573.21px;font-size:16.72px;font-weight:bold;transform:scaleX(1.0678);">Апт №003 пгт.Барышевка, ул.Киевский шлях,126а</div><div class="t" style="left:1869.30px;top:573.21px;font-size:16.72px;font-weight:bold;transform:scaleX(1.0898);">Апт №003 пгт.Барышевка, ул.</div><div class="t" style="left:36.88px;top:602.21px;font-size:16.72px;font-weight:bold;transform:scaleX(1.1866);">64018</div><div class="t" style="left:144.02px;top:602.21px;font-size:16.72px;font-weight:bold;transform:scaleX(1.0750);">Склад</div><div class="t" style="left:302.76px;top:602.21px;font-size:16.72px;font-weight:bold;transform:scaleX(1.1300);">4,00</div><div class="t" style="left:357.50px;top:602.21px;font-size:16.72px;font-weight:bold;color:#ff7468;transform:scaleX(0.9155);">П</div><div class="t" style="left:552.20px;top:602.21px;font-size:16.72px;font-weight:bold;transform:scaleX(1.1194);">834</div><div class="t" style="left:726.30px;top:602.21px;font-size:16.72px;font-weight:bold;transform:scaleX(1.0678);">Апт №003 пгт.Барышевка, ул.Киевский шлях,126а</div><div class="t" style="left:1298.00px;top:602.21px;font-size:16.72px;font-weight:bold;transform:scaleX(1.0678);">Апт №003 пгт.Барышевка, ул.Киевский шлях,126а</div><div class="t" style="left:1869.30px;top:602.21px;font-size:16.72px;font-weight:bold;transform:scaleX(1.0898);">Апт №003 пгт.Барышевка, ул.</div><div class="t" style="left:36.88px;top:630.21px;font-size:16.72px;font-weight:bold;transform:scaleX(1.1866);">64037</div><div class="t" style="left:144.02px;top:630.21px;font-size:16.72px;font-weight:bold;transform:scaleX(1.0750);">Склад</div><div class="t" style="left:302.76px;top:630.21px;font-size:16.72px;font-weight:bold;transform:scaleX(1.1300);">2,00</div><svg class="r" style="left:379px;top:617px" width="22" height="23" viewBox="0 0 22 23"><defs><linearGradient id="lg" x1="0" y1="0" x2="0" y2="1"><stop offset="0" stop-color="#fbe37a"/><stop offset="1" stop-color="#f2c200"/></linearGradient><radialGradient id="lh" cx=".5" cy=".35" r=".6"><stop offset="0" stop-color="#fff6b8"/><stop offset="1" stop-color="#f4cc20" stop-opacity="0"/></radialGradient></defs><path d="M7.3 9.5V6.2a3.7 3.7 0 0 1 7.4 0V9.5" fill="none" stroke="#7a7a7a" stroke-width="3.6"/><path d="M7.3 9V6.2a3.7 3.7 0 0 1 7.4 0V9" fill="none" stroke="#c4c4c4" stroke-width="1.4"/><rect x="0.5" y="7.5" width="21" height="14.5" rx="1.5" fill="url(#lg)" stroke="#c08c00" stroke-width="1"/><path d="M1 11.3h6M15 11.3h6M1 14.6h6M15 14.6h6M1 17.9h6M15 17.9h6" stroke="#c89000" stroke-width="1.3"/><rect x="6.5" y="8" width="9" height="13.5" fill="url(#lh)"/></svg><div class="t" style="left:552.20px;top:630.21px;font-size:16.72px;font-weight:bold;transform:scaleX(1.1194);">849</div><div class="t" style="left:726.30px;top:630.21px;font-size:16.72px;font-weight:bold;transform:scaleX(1.0678);">Апт №003 пгт.Барышевка, ул.Киевский шлях,126а</div><div class="t" style="left:1298.00px;top:630.21px;font-size:16.72px;font-weight:bold;transform:scaleX(1.0678);">Апт №003 пгт.Барышевка, ул.Киевский шлях,126а</div><div class="t" style="left:1869.30px;top:630.21px;font-size:16.72px;font-weight:bold;transform:scaleX(1.0860);">Апт №006 г.Киев, ул.Саксаган</div><div class="t" style="left:36.88px;top:659.21px;font-size:16.72px;font-weight:bold;transform:scaleX(1.1866);">64031</div><div class="t" style="left:144.02px;top:659.21px;font-size:16.72px;font-weight:bold;transform:scaleX(1.0750);">Склад</div><div class="t" style="left:302.76px;top:659.21px;font-size:16.72px;font-weight:bold;transform:scaleX(1.1300);">1,00</div><svg class="r" style="left:379px;top:646px" width="22" height="23" viewBox="0 0 22 23"><defs><linearGradient id="lg" x1="0" y1="0" x2="0" y2="1"><stop offset="0" stop-color="#fbe37a"/><stop offset="1" stop-color="#f2c200"/></linearGradient><radialGradient id="lh" cx=".5" cy=".35" r=".6"><stop offset="0" stop-color="#fff6b8"/><stop offset="1" stop-color="#f4cc20" stop-opacity="0"/></radialGradient></defs><path d="M7.3 9.5V6.2a3.7 3.7 0 0 1 7.4 0V9.5" fill="none" stroke="#7a7a7a" stroke-width="3.6"/><path d="M7.3 9V6.2a3.7 3.7 0 0 1 7.4 0V9" fill="none" stroke="#c4c4c4" stroke-width="1.4"/><rect x="0.5" y="7.5" width="21" height="14.5" rx="1.5" fill="url(#lg)" stroke="#c08c00" stroke-width="1"/><path d="M1 11.3h6M15 11.3h6M1 14.6h6M15 14.6h6M1 17.9h6M15 17.9h6" stroke="#c89000" stroke-width="1.3"/><rect x="6.5" y="8" width="9" height="13.5" fill="url(#lh)"/></svg><div class="t" style="left:552.20px;top:659.21px;font-size:16.72px;font-weight:bold;transform:scaleX(1.1194);">843</div><div class="t" style="left:726.30px;top:659.21px;font-size:16.72px;font-weight:bold;transform:scaleX(1.0678);">Апт №003 пгт.Барышевка, ул.Киевский шлях,126а</div><div class="t" style="left:1298.00px;top:659.21px;font-size:16.72px;font-weight:bold;transform:scaleX(1.0678);">Апт №003 пгт.Барышевка, ул.Киевский шлях,126а</div><div class="t" style="left:1869.30px;top:659.21px;font-size:16.72px;font-weight:bold;transform:scaleX(1.0860);">Апт №006 г.Киев, ул.Саксаган</div><div class="t" style="left:36.88px;top:687.21px;font-size:16.72px;font-weight:bold;transform:scaleX(1.1866);">64035</div><div class="t" style="left:144.02px;top:687.21px;font-size:16.72px;font-weight:bold;transform:scaleX(1.0750);">Склад</div><div class="t" style="left:302.76px;top:687.21px;font-size:16.72px;font-weight:bold;transform:scaleX(1.1300);">2,00</div><svg class="r" style="left:379px;top:674px" width="22" height="23" viewBox="0 0 22 23"><defs><linearGradient id="lg" x1="0" y1="0" x2="0" y2="1"><stop offset="0" stop-color="#fbe37a"/><stop offset="1" stop-color="#f2c200"/></linearGradient><radialGradient id="lh" cx=".5" cy=".35" r=".6"><stop offset="0" stop-color="#fff6b8"/><stop offset="1" stop-color="#f4cc20" stop-opacity="0"/></radialGradient></defs><path d="M7.3 9.5V6.2a3.7 3.7 0 0 1 7.4 0V9.5" fill="none" stroke="#7a7a7a" stroke-width="3.6"/><path d="M7.3 9V6.2a3.7 3.7 0 0 1 7.4 0V9" fill="none" stroke="#c4c4c4" stroke-width="1.4"/><rect x="0.5" y="7.5" width="21" height="14.5" rx="1.5" fill="url(#lg)" stroke="#c08c00" stroke-width="1"/><path d="M1 11.3h6M15 11.3h6M1 14.6h6M15 14.6h6M1 17.9h6M15 17.9h6" stroke="#c89000" stroke-width="1.3"/><rect x="6.5" y="8" width="9" height="13.5" fill="url(#lh)"/></svg><div class="t" style="left:552.20px;top:687.21px;font-size:16.72px;font-weight:bold;transform:scaleX(1.1194);">847</div><div class="t" style="left:726.30px;top:687.21px;font-size:16.72px;font-weight:bold;transform:scaleX(1.0678);">Апт №003 пгт.Барышевка, ул.Киевский шлях,126а</div><div class="t" style="left:1298.00px;top:687.21px;font-size:16.72px;font-weight:bold;transform:scaleX(1.0678);">Апт №003 пгт.Барышевка, ул.Киевский шлях,126а</div><div class="t" style="left:1869.30px;top:687.21px;font-size:16.72px;font-weight:bold;transform:scaleX(1.0860);">Апт №006 г.Киев, ул.Саксаган</div><div class="t" style="left:36.88px;top:716.21px;font-size:16.72px;font-weight:bold;transform:scaleX(1.1866);">64032</div><div class="t" style="left:144.02px;top:716.21px;font-size:16.72px;font-weight:bold;transform:scaleX(1.0750);">Склад</div><div class="t" style="left:302.76px;top:716.21px;font-size:16.72px;font-weight:bold;transform:scaleX(1.1300);">1,00</div><svg class="r" style="left:379px;top:703px" width="22" height="23" viewBox="0 0 22 23"><defs><linearGradient id="lg" x1="0" y1="0" x2="0" y2="1"><stop offset="0" stop-color="#fbe37a"/><stop offset="1" stop-color="#f2c200"/></linearGradient><radialGradient id="lh" cx=".5" cy=".35" r=".6"><stop offset="0" stop-color="#fff6b8"/><stop offset="1" stop-color="#f4cc20" stop-opacity="0"/></radialGradient></defs><path d="M7.3 9.5V6.2a3.7 3.7 0 0 1 7.4 0V9.5" fill="none" stroke="#7a7a7a" stroke-width="3.6"/><path d="M7.3 9V6.2a3.7 3.7 0 0 1 7.4 0V9" fill="none" stroke="#c4c4c4" stroke-width="1.4"/><rect x="0.5" y="7.5" width="21" height="14.5" rx="1.5" fill="url(#lg)" stroke="#c08c00" stroke-width="1"/><path d="M1 11.3h6M15 11.3h6M1 14.6h6M15 14.6h6M1 17.9h6M15 17.9h6" stroke="#c89000" stroke-width="1.3"/><rect x="6.5" y="8" width="9" height="13.5" fill="url(#lh)"/></svg><div class="t" style="left:552.20px;top:716.21px;font-size:16.72px;font-weight:bold;transform:scaleX(1.1194);">844</div><div class="t" style="left:726.30px;top:716.21px;font-size:16.72px;font-weight:bold;transform:scaleX(1.0678);">Апт №003 пгт.Барышевка, ул.Киевский шлях,126а</div><div class="t" style="left:1298.00px;top:716.21px;font-size:16.72px;font-weight:bold;transform:scaleX(1.0678);">Апт №003 пгт.Барышевка, ул.Киевский шлях,126а</div><div class="t" style="left:1869.30px;top:716.21px;font-size:16.72px;font-weight:bold;transform:scaleX(1.0860);">Апт №006 г.Киев, ул.Саксаган</div><div class="t" style="left:36.88px;top:744.21px;font-size:16.72px;font-weight:bold;transform:scaleX(1.1866);">64036</div><div class="t" style="left:144.02px;top:744.21px;font-size:16.72px;font-weight:bold;transform:scaleX(1.0750);">Склад</div><div class="t" style="left:302.76px;top:744.21px;font-size:16.72px;font-weight:bold;transform:scaleX(1.1300);">2,00</div><svg class="r" style="left:379px;top:731px" width="22" height="23" viewBox="0 0 22 23"><defs><linearGradient id="lg" x1="0" y1="0" x2="0" y2="1"><stop offset="0" stop-color="#fbe37a"/><stop offset="1" stop-color="#f2c200"/></linearGradient><radialGradient id="lh" cx=".5" cy=".35" r=".6"><stop offset="0" stop-color="#fff6b8"/><stop offset="1" stop-color="#f4cc20" stop-opacity="0"/></radialGradient></defs><path d="M7.3 9.5V6.2a3.7 3.7 0 0 1 7.4 0V9.5" fill="none" stroke="#7a7a7a" stroke-width="3.6"/><path d="M7.3 9V6.2a3.7 3.7 0 0 1 7.4 0V9" fill="none" stroke="#c4c4c4" stroke-width="1.4"/><rect x="0.5" y="7.5" width="21" height="14.5" rx="1.5" fill="url(#lg)" stroke="#c08c00" stroke-width="1"/><path d="M1 11.3h6M15 11.3h6M1 14.6h6M15 14.6h6M1 17.9h6M15 17.9h6" stroke="#c89000" stroke-width="1.3"/><rect x="6.5" y="8" width="9" height="13.5" fill="url(#lh)"/></svg><div class="t" style="left:552.20px;top:744.21px;font-size:16.72px;font-weight:bold;transform:scaleX(1.1194);">848</div><div class="t" style="left:726.30px;top:744.21px;font-size:16.72px;font-weight:bold;transform:scaleX(1.0678);">Апт №003 пгт.Барышевка, ул.Киевский шлях,126а</div><div class="t" style="left:1298.00px;top:744.21px;font-size:16.72px;font-weight:bold;transform:scaleX(1.0678);">Апт №003 пгт.Барышевка, ул.Киевский шлях,126а</div><div class="t" style="left:1869.30px;top:744.21px;font-size:16.72px;font-weight:bold;transform:scaleX(1.0860);">Апт №006 г.Киев, ул.Саксаган</div><div class="t" style="left:36.88px;top:773.21px;font-size:16.72px;font-weight:bold;transform:scaleX(1.1866);">64034</div><div class="t" style="left:144.02px;top:773.21px;font-size:16.72px;font-weight:bold;transform:scaleX(1.0750);">Склад</div><div class="t" style="left:302.76px;top:773.21px;font-size:16.72px;font-weight:bold;transform:scaleX(1.1300);">2,00</div><svg class="r" style="left:379px;top:760px" width="22" height="23" viewBox="0 0 22 23"><defs><linearGradient id="lg" x1="0" y1="0" x2="0" y2="1"><stop offset="0" stop-color="#fbe37a"/><stop offset="1" stop-color="#f2c200"/></linearGradient><radialGradient id="lh" cx=".5" cy=".35" r=".6"><stop offset="0" stop-color="#fff6b8"/><stop offset="1" stop-color="#f4cc20" stop-opacity="0"/></radialGradient></defs><path d="M7.3 9.5V6.2a3.7 3.7 0 0 1 7.4 0V9.5" fill="none" stroke="#7a7a7a" stroke-width="3.6"/><path d="M7.3 9V6.2a3.7 3.7 0 0 1 7.4 0V9" fill="none" stroke="#c4c4c4" stroke-width="1.4"/><rect x="0.5" y="7.5" width="21" height="14.5" rx="1.5" fill="url(#lg)" stroke="#c08c00" stroke-width="1"/><path d="M1 11.3h6M15 11.3h6M1 14.6h6M15 14.6h6M1 17.9h6M15 17.9h6" stroke="#c89000" stroke-width="1.3"/><rect x="6.5" y="8" width="9" height="13.5" fill="url(#lh)"/></svg><div class="t" style="left:552.20px;top:773.21px;font-size:16.72px;font-weight:bold;transform:scaleX(1.1194);">846</div><div class="t" style="left:726.30px;top:773.21px;font-size:16.72px;font-weight:bold;transform:scaleX(1.0678);">Апт №003 пгт.Барышевка, ул.Киевский шлях,126а</div><div class="t" style="left:1298.00px;top:773.21px;font-size:16.72px;font-weight:bold;transform:scaleX(1.0678);">Апт №003 пгт.Барышевка, ул.Киевский шлях,126а</div><div class="t" style="left:1869.30px;top:773.21px;font-size:16.72px;font-weight:bold;transform:scaleX(1.0860);">Апт №006 г.Киев, ул.Саксаган</div><div class="t" style="left:36.88px;top:801.21px;font-size:16.72px;font-weight:bold;transform:scaleX(1.1866);">64044</div><div class="t" style="left:144.02px;top:801.21px;font-size:16.72px;font-weight:bold;transform:scaleX(1.0750);">Склад</div><div class="t" style="left:302.76px;top:801.21px;font-size:16.72px;font-weight:bold;transform:scaleX(1.1300);">1,00</div><svg class="r" style="left:379px;top:788px" width="22" height="23" viewBox="0 0 22 23"><defs><linearGradient id="lg" x1="0" y1="0" x2="0" y2="1"><stop offset="0" stop-color="#fbe37a"/><stop offset="1" stop-color="#f2c200"/></linearGradient><radialGradient id="lh" cx=".5" cy=".35" r=".6"><stop offset="0" stop-color="#fff6b8"/><stop offset="1" stop-color="#f4cc20" stop-opacity="0"/></radialGradient></defs><path d="M7.3 9.5V6.2a3.7 3.7 0 0 1 7.4 0V9.5" fill="none" stroke="#7a7a7a" stroke-width="3.6"/><path d="M7.3 9V6.2a3.7 3.7 0 0 1 7.4 0V9" fill="none" stroke="#c4c4c4" stroke-width="1.4"/><rect x="0.5" y="7.5" width="21" height="14.5" rx="1.5" fill="url(#lg)" stroke="#c08c00" stroke-width="1"/><path d="M1 11.3h6M15 11.3h6M1 14.6h6M15 14.6h6M1 17.9h6M15 17.9h6" stroke="#c89000" stroke-width="1.3"/><rect x="6.5" y="8" width="9" height="13.5" fill="url(#lh)"/></svg><div class="t" style="left:552.20px;top:801.21px;font-size:16.72px;font-weight:bold;transform:scaleX(1.1194);">850</div><div class="t" style="left:726.30px;top:801.21px;font-size:16.72px;font-weight:bold;transform:scaleX(1.0678);">Апт №003 пгт.Барышевка, ул.Киевский шлях,126а</div><div class="t" style="left:1298.00px;top:801.21px;font-size:16.72px;font-weight:bold;transform:scaleX(1.0678);">Апт №003 пгт.Барышевка, ул.Киевский шлях,126а</div><div class="t" style="left:1869.30px;top:801.21px;font-size:16.72px;font-weight:bold;transform:scaleX(1.0898);">Апт №003 пгт.Барышевка, ул.</div><div class="t" style="left:36.88px;top:830.21px;font-size:16.72px;font-weight:bold;transform:scaleX(1.1866);">64045</div><div class="t" style="left:144.02px;top:830.21px;font-size:16.72px;font-weight:bold;transform:scaleX(1.0750);">Склад</div><div class="t" style="left:302.76px;top:830.21px;font-size:16.72px;font-weight:bold;transform:scaleX(1.1300);">1,00</div><svg class="r" style="left:379px;top:817px" width="22" height="23" viewBox="0 0 22 23"><defs><linearGradient id="lg" x1="0" y1="0" x2="0" y2="1"><stop offset="0" stop-color="#fbe37a"/><stop offset="1" stop-color="#f2c200"/></linearGradient><radialGradient id="lh" cx=".5" cy=".35" r=".6"><stop offset="0" stop-color="#fff6b8"/><stop offset="1" stop-color="#f4cc20" stop-opacity="0"/></radialGradient></defs><path d="M7.3 9.5V6.2a3.7 3.7 0 0 1 7.4 0V9.5" fill="none" stroke="#7a7a7a" stroke-width="3.6"/><path d="M7.3 9V6.2a3.7 3.7 0 0 1 7.4 0V9" fill="none" stroke="#c4c4c4" stroke-width="1.4"/><rect x="0.5" y="7.5" width="21" height="14.5" rx="1.5" fill="url(#lg)" stroke="#c08c00" stroke-width="1"/><path d="M1 11.3h6M15 11.3h6M1 14.6h6M15 14.6h6M1 17.9h6M15 17.9h6" stroke="#c89000" stroke-width="1.3"/><rect x="6.5" y="8" width="9" height="13.5" fill="url(#lh)"/></svg><div class="t" style="left:552.20px;top:830.21px;font-size:16.72px;font-weight:bold;transform:scaleX(1.1194);">851</div><div class="t" style="left:726.30px;top:830.21px;font-size:16.72px;font-weight:bold;transform:scaleX(1.0678);">Апт №003 пгт.Барышевка, ул.Киевский шлях,126а</div><div class="t" style="left:1298.00px;top:830.21px;font-size:16.72px;font-weight:bold;transform:scaleX(1.0678);">Апт №003 пгт.Барышевка, ул.Киевский шлях,126а</div><div class="t" style="left:1869.30px;top:830.21px;font-size:16.72px;font-weight:bold;transform:scaleX(1.0898);">Апт №003 пгт.Барышевка, ул.</div><div class="t" style="left:36.88px;top:858.21px;font-size:16.72px;font-weight:bold;transform:scaleX(1.1866);">64098</div><div class="t" style="left:144.02px;top:858.21px;font-size:16.72px;font-weight:bold;transform:scaleX(1.0750);">Склад</div><div class="t" style="left:302.76px;top:858.21px;font-size:16.72px;font-weight:bold;transform:scaleX(1.1300);">2,00</div><div class="t" style="left:357.50px;top:858.21px;font-size:16.72px;font-weight:bold;color:#ff7468;transform:scaleX(0.9155);">П</div><div class="t" style="left:552.20px;top:858.21px;font-size:16.72px;font-weight:bold;transform:scaleX(1.1194);">853</div><div class="t" style="left:726.30px;top:858.21px;font-size:16.72px;font-weight:bold;transform:scaleX(1.0678);">Апт №003 пгт.Барышевка, ул.Киевский шлях,126а</div><div class="t" style="left:1298.00px;top:858.21px;font-size:16.72px;font-weight:bold;transform:scaleX(1.0678);">Апт №003 пгт.Барышевка, ул.Киевский шлях,126а</div><div class="t" style="left:1869.30px;top:858.21px;font-size:16.72px;font-weight:bold;transform:scaleX(1.0898);">Апт №003 пгт.Барышевка, ул.</div><div class="t" style="left:39.07px;top:887.21px;font-size:16.72px;font-weight:bold;transform:scaleX(1.1866);">64111</div><div class="t" style="left:144.02px;top:887.21px;font-size:16.72px;font-weight:bold;transform:scaleX(1.0750);">Склад</div><div class="t" style="left:357.50px;top:887.21px;font-size:16.72px;font-weight:bold;color:#ff7468;transform:scaleX(0.9155);">П</div><div class="t" style="left:552.20px;top:887.21px;font-size:16.72px;font-weight:bold;transform:scaleX(1.1194);">856</div><div class="t" style="left:726.30px;top:887.21px;font-size:16.72px;font-weight:bold;transform:scaleX(1.0678);">Апт №003 пгт.Барышевка, ул.Киевский шлях,126а</div><div class="t" style="left:1298.00px;top:887.21px;font-size:16.72px;font-weight:bold;transform:scaleX(1.0678);">Апт №003 пгт.Барышевка, ул.Киевский шлях,126а</div><div class="t" style="left:1869.30px;top:887.21px;font-size:16.72px;font-weight:bold;transform:scaleX(1.0898);">Апт №003 пгт.Барышевка, ул.</div><div class="t" style="left:36.88px;top:915.21px;font-size:16.72px;font-weight:bold;transform:scaleX(1.1866);">64146</div><div class="t" style="left:144.02px;top:915.21px;font-size:16.72px;font-weight:bold;transform:scaleX(1.0750);">Склад</div><div class="t" style="left:292.25px;top:915.21px;font-size:16.72px;font-weight:bold;transform:scaleX(1.1300);">10,00</div><div class="t" style="left:357.50px;top:915.21px;font-size:16.72px;font-weight:bold;color:#ff7468;transform:scaleX(0.9155);">П</div><div class="t" style="left:552.20px;top:915.21px;font-size:16.72px;font-weight:bold;transform:scaleX(1.1194);">860</div><div class="t" style="left:726.30px;top:915.21px;font-size:16.72px;font-weight:bold;transform:scaleX(1.0678);">Апт №003 пгт.Барышевка, ул.Киевский шлях,126а</div><div class="t" style="left:1298.00px;top:915.21px;font-size:16.72px;font-weight:bold;transform:scaleX(1.0678);">Апт №003 пгт.Барышевка, ул.Киевский шлях,126а</div><div class="t" style="left:1869.30px;top:915.21px;font-size:16.72px;font-weight:bold;transform:scaleX(1.0898);">Апт №003 пгт.Барышевка, ул.</div><div class="t" style="left:36.88px;top:944.21px;font-size:16.72px;font-weight:bold;transform:scaleX(1.1866);">64199</div><div class="t" style="left:144.02px;top:944.21px;font-size:16.72px;font-weight:bold;transform:scaleX(1.0750);">Склад</div><div class="t" style="left:292.25px;top:944.21px;font-size:16.72px;font-weight:bold;transform:scaleX(1.1300);">20,00</div><div class="t" style="left:357.50px;top:944.21px;font-size:16.72px;font-weight:bold;color:#ff7468;transform:scaleX(0.9155);">П</div><div class="t" style="left:552.20px;top:944.21px;font-size:16.72px;font-weight:bold;transform:scaleX(1.1194);">861</div><div class="t" style="left:726.30px;top:944.21px;font-size:16.72px;font-weight:bold;transform:scaleX(1.0678);">Апт №003 пгт.Барышевка, ул.Киевский шлях,126а</div><div class="t" style="left:1298.00px;top:944.21px;font-size:16.72px;font-weight:bold;transform:scaleX(1.0678);">Апт №003 пгт.Барышевка, ул.Киевский шлях,126а</div><div class="t" style="left:1869.30px;top:944.21px;font-size:16.72px;font-weight:bold;transform:scaleX(1.0898);">Апт №003 пгт.Барышевка, ул.</div><div class="t" style="left:36.88px;top:972.21px;font-size:16.72px;font-weight:bold;transform:scaleX(1.1866);">64200</div><div class="t" style="left:144.02px;top:972.21px;font-size:16.72px;font-weight:bold;transform:scaleX(1.0750);">Склад</div><div class="t" style="left:292.25px;top:972.21px;font-size:16.72px;font-weight:bold;transform:scaleX(1.1300);">80,00</div><svg class="r" style="left:379px;top:959px" width="22" height="23" viewBox="0 0 22 23"><defs><linearGradient id="lg" x1="0" y1="0" x2="0" y2="1"><stop offset="0" stop-color="#fbe37a"/><stop offset="1" stop-color="#f2c200"/></linearGradient><radialGradient id="lh" cx=".5" cy=".35" r=".6"><stop offset="0" stop-color="#fff6b8"/><stop offset="1" stop-color="#f4cc20" stop-opacity="0"/></radialGradient></defs><path d="M7.3 9.5V6.2a3.7 3.7 0 0 1 7.4 0V9.5" fill="none" stroke="#7a7a7a" stroke-width="3.6"/><path d="M7.3 9V6.2a3.7 3.7 0 0 1 7.4 0V9" fill="none" stroke="#c4c4c4" stroke-width="1.4"/><rect x="0.5" y="7.5" width="21" height="14.5" rx="1.5" fill="url(#lg)" stroke="#c08c00" stroke-width="1"/><path d="M1 11.3h6M15 11.3h6M1 14.6h6M15 14.6h6M1 17.9h6M15 17.9h6" stroke="#c89000" stroke-width="1.3"/><rect x="6.5" y="8" width="9" height="13.5" fill="url(#lh)"/></svg><div class="t" style="left:552.20px;top:972.21px;font-size:16.72px;font-weight:bold;transform:scaleX(1.1194);">862</div><div class="t" style="left:726.30px;top:972.21px;font-size:16.72px;font-weight:bold;transform:scaleX(1.0678);">Апт №003 пгт.Барышевка, ул.Киевский шлях,126а</div><div class="t" style="left:1298.00px;top:972.21px;font-size:16.72px;font-weight:bold;transform:scaleX(1.0678);">Апт №003 пгт.Барышевка, ул.Киевский шлях,126а</div><div class="t" style="left:1869.30px;top:972.21px;font-size:16.72px;font-weight:bold;transform:scaleX(1.0898);">Апт №003 пгт.Барышевка, ул.</div><div class="t" style="left:36.88px;top:1001.21px;font-size:16.72px;font-weight:bold;transform:scaleX(1.1866);">64219</div><div class="t" style="left:144.02px;top:1001.21px;font-size:16.72px;font-weight:bold;transform:scaleX(1.0750);">Склад</div><div class="t" style="left:302.76px;top:1001.21px;font-size:16.72px;font-weight:bold;transform:scaleX(1.1300);">1,00</div><div class="t" style="left:357.50px;top:1001.21px;font-size:16.72px;font-weight:bold;color:#ff7468;transform:scaleX(0.9155);">П</div><div class="t" style="left:552.20px;top:1001.21px;font-size:16.72px;font-weight:bold;transform:scaleX(1.1194);">867</div><div class="t" style="left:726.30px;top:1001.21px;font-size:16.72px;font-weight:bold;transform:scaleX(1.0678);">Апт №003 пгт.Барышевка, ул.Киевский шлях,126а</div><div class="t" style="left:1298.00px;top:1001.21px;font-size:16.72px;font-weight:bold;transform:scaleX(1.0678);">Апт №003 пгт.Барышевка, ул.Киевский шлях,126а</div><div class="t" style="left:1869.30px;top:1001.21px;font-size:16.72px;font-weight:bold;transform:scaleX(1.0898);">Апт №003 пгт.Барышевка, ул.</div><div class="t" style="left:36.88px;top:1029.21px;font-size:16.72px;font-weight:bold;transform:scaleX(1.1866);">63951</div><div class="t" style="left:144.02px;top:1029.21px;font-size:16.72px;font-weight:bold;transform:scaleX(1.0750);">Склад</div><div class="t" style="left:302.76px;top:1029.21px;font-size:16.72px;font-weight:bold;transform:scaleX(1.1300);">0,00</div><div class="t" style="left:357.50px;top:1029.21px;font-size:16.72px;font-weight:bold;color:#ff7468;transform:scaleX(0.9155);">П</div><div class="t" style="left:552.20px;top:1029.21px;font-size:16.72px;font-weight:bold;transform:scaleX(1.1194);">830</div><div class="t" style="left:726.30px;top:1029.21px;font-size:16.72px;font-weight:bold;transform:scaleX(1.0678);">Апт №003 пгт.Барышевка, ул.Киевский шлях,126а</div><div class="t" style="left:1298.00px;top:1029.21px;font-size:16.72px;font-weight:bold;transform:scaleX(1.0678);">Апт №003 пгт.Барышевка, ул.Киевский шлях,126а</div><div class="t" style="left:1869.30px;top:1029.21px;font-size:16.72px;font-weight:bold;transform:scaleX(1.0898);">Апт №003 пгт.Барышевка, ул.</div><div class="t" style="left:36.88px;top:1058.21px;font-size:16.72px;font-weight:bold;transform:scaleX(1.1866);">63869</div><div class="t" style="left:144.02px;top:1058.21px;font-size:16.72px;font-weight:bold;transform:scaleX(1.0750);">Склад</div><div class="t" style="left:292.25px;top:1058.21px;font-size:16.72px;font-weight:bold;transform:scaleX(1.1300);">43,82</div><div class="t" style="left:357.50px;top:1058.21px;font-size:16.72px;font-weight:bold;color:#ff7468;transform:scaleX(0.9155);">П</div><div class="t" style="left:552.20px;top:1058.21px;font-size:16.72px;font-weight:bold;transform:scaleX(1.1194);">820</div><div class="t" style="left:726.30px;top:1058.21px;font-size:16.72px;font-weight:bold;transform:scaleX(1.0678);">Апт №003 пгт.Барышевка, ул.Киевский шлях,126а</div><div class="t" style="left:1298.00px;top:1058.21px;font-size:16.72px;font-weight:bold;transform:scaleX(1.0678);">Апт №003 пгт.Барышевка, ул.Киевский шлях,126а</div><div class="t" style="left:1869.30px;top:1058.21px;font-size:16.72px;font-weight:bold;transform:scaleX(1.0898);">Апт №003 пгт.Барышевка, ул.</div><div class="t" style="left:36.88px;top:1086.21px;font-size:16.72px;font-weight:bold;transform:scaleX(1.1866);">63910</div><div class="t" style="left:144.02px;top:1086.21px;font-size:16.72px;font-weight:bold;transform:scaleX(1.0750);">Склад</div><div class="t" style="left:302.76px;top:1086.21px;font-size:16.72px;font-weight:bold;transform:scaleX(1.1300);">0,00</div><div class="t" style="left:357.50px;top:1086.21px;font-size:16.72px;font-weight:bold;color:#ff7468;transform:scaleX(0.9155);">П</div><div class="t" style="left:552.20px;top:1086.21px;font-size:16.72px;font-weight:bold;transform:scaleX(1.1194);">821</div><div class="t" style="left:726.30px;top:1086.21px;font-size:16.72px;font-weight:bold;transform:scaleX(1.0678);">Апт №003 пгт.Барышевка, ул.Киевский шлях,126а</div><div class="t" style="left:1298.00px;top:1086.21px;font-size:16.72px;font-weight:bold;transform:scaleX(1.0678);">Апт №003 пгт.Барышевка, ул.Киевский шлях,126а</div><div class="t" style="left:36.88px;top:1115.21px;font-size:16.72px;font-weight:bold;transform:scaleX(1.1866);">63929</div><div class="t" style="left:144.02px;top:1115.21px;font-size:16.72px;font-weight:bold;transform:scaleX(1.0750);">Склад</div><div class="t" style="left:302.76px;top:1115.21px;font-size:16.72px;font-weight:bold;transform:scaleX(1.1300);">1,00</div><svg class="r" style="left:379px;top:1102px" width="22" height="23" viewBox="0 0 22 23"><defs><linearGradient id="lg" x1="0" y1="0" x2="0" y2="1"><stop offset="0" stop-color="#fbe37a"/><stop offset="1" stop-color="#f2c200"/></linearGradient><radialGradient id="lh" cx=".5" cy=".35" r=".6"><stop offset="0" stop-color="#fff6b8"/><stop offset="1" stop-color="#f4cc20" stop-opacity="0"/></radialGradient></defs><path d="M7.3 9.5V6.2a3.7 3.7 0 0 1 7.4 0V9.5" fill="none" stroke="#7a7a7a" stroke-width="3.6"/><path d="M7.3 9V6.2a3.7 3.7 0 0 1 7.4 0V9" fill="none" stroke="#c4c4c4" stroke-width="1.4"/><rect x="0.5" y="7.5" width="21" height="14.5" rx="1.5" fill="url(#lg)" stroke="#c08c00" stroke-width="1"/><path d="M1 11.3h6M15 11.3h6M1 14.6h6M15 14.6h6M1 17.9h6M15 17.9h6" stroke="#c89000" stroke-width="1.3"/><rect x="6.5" y="8" width="9" height="13.5" fill="url(#lh)"/></svg><div class="t" style="left:552.20px;top:1115.21px;font-size:16.72px;font-weight:bold;transform:scaleX(1.1194);">822</div><div class="t" style="left:726.30px;top:1115.21px;font-size:16.72px;font-weight:bold;transform:scaleX(1.0678);">Апт №003 пгт.Барышевка, ул.Киевский шлях,126а</div><div class="t" style="left:1298.00px;top:1115.21px;font-size:16.72px;font-weight:bold;transform:scaleX(1.0678);">Апт №003 пгт.Барышевка, ул.Киевский шлях,126а</div><div class="t" style="left:1869.30px;top:1115.21px;font-size:16.72px;font-weight:bold;transform:scaleX(1.0898);">Апт №003 пгт.Барышевка, ул.</div><div class="t" style="left:36.88px;top:1143.21px;font-size:16.72px;font-weight:bold;transform:scaleX(1.1866);">64019</div><div class="t" style="left:144.02px;top:1143.21px;font-size:16.72px;font-weight:bold;transform:scaleX(1.0750);">Склад</div><div class="t" style="left:302.76px;top:1143.21px;font-size:16.72px;font-weight:bold;transform:scaleX(1.1300);">2,00</div><svg class="r" style="left:379px;top:1130px" width="22" height="23" viewBox="0 0 22 23"><defs><linearGradient id="lg" x1="0" y1="0" x2="0" y2="1"><stop offset="0" stop-color="#fbe37a"/><stop offset="1" stop-color="#f2c200"/></linearGradient><radialGradient id="lh" cx=".5" cy=".35" r=".6"><stop offset="0" stop-color="#fff6b8"/><stop offset="1" stop-color="#f4cc20" stop-opacity="0"/></radialGradient></defs><path d="M7.3 9.5V6.2a3.7 3.7 0 0 1 7.4 0V9.5" fill="none" stroke="#7a7a7a" stroke-width="3.6"/><path d="M7.3 9V6.2a3.7 3.7 0 0 1 7.4 0V9" fill="none" stroke="#c4c4c4" stroke-width="1.4"/><rect x="0.5" y="7.5" width="21" height="14.5" rx="1.5" fill="url(#lg)" stroke="#c08c00" stroke-width="1"/><path d="M1 11.3h6M15 11.3h6M1 14.6h6M15 14.6h6M1 17.9h6M15 17.9h6" stroke="#c89000" stroke-width="1.3"/><rect x="6.5" y="8" width="9" height="13.5" fill="url(#lh)"/></svg><div class="t" style="left:552.20px;top:1143.21px;font-size:16.72px;font-weight:bold;transform:scaleX(1.2419);">834/835</div><div class="t" style="left:726.30px;top:1143.21px;font-size:16.72px;font-weight:bold;transform:scaleX(1.0678);">Апт №003 пгт.Барышевка, ул.Киевский шлях,126а</div><div class="t" style="left:1298.00px;top:1143.21px;font-size:16.72px;font-weight:bold;transform:scaleX(1.0509);">БаДМ ТОВ</div><div class="t" style="left:1869.30px;top:1143.21px;font-size:16.72px;font-weight:bold;transform:scaleX(1.0898);">Апт №003 пгт.Барышевка, ул.</div><div class="t" style="left:36.88px;top:1172.21px;font-size:16.72px;font-weight:bold;transform:scaleX(1.1866);">64020</div><div class="t" style="left:144.02px;top:1172.21px;font-size:16.72px;font-weight:bold;transform:scaleX(1.0750);">Склад</div><div class="t" style="left:302.76px;top:1172.21px;font-size:16.72px;font-weight:bold;transform:scaleX(1.1300);">2,00</div><div class="t" style="left:357.50px;top:1172.21px;font-size:16.72px;font-weight:bold;color:#ff7468;transform:scaleX(0.9155);">П</div><div class="t" style="left:552.20px;top:1172.21px;font-size:16.72px;font-weight:bold;transform:scaleX(1.2419);">834/836</div><div class="t" style="left:726.30px;top:1172.21px;font-size:16.72px;font-weight:bold;transform:scaleX(1.0678);">Апт №003 пгт.Барышевка, ул.Киевский шлях,126а</div><div class="t" style="left:1298.00px;top:1172.21px;font-size:16.72px;font-weight:bold;transform:scaleX(1.0300);">Оптима фарм, ЛТД СП</div><div class="t" style="left:1869.30px;top:1172.21px;font-size:16.72px;font-weight:bold;transform:scaleX(1.0898);">Апт №003 пгт.Барышевка, ул.</div><div class="t" style="left:36.88px;top:1200.21px;font-size:16.72px;font-weight:bold;transform:scaleX(1.1866);">64021</div><div class="t" style="left:144.02px;top:1200.21px;font-size:16.72px;font-weight:bold;transform:scaleX(1.0750);">Склад</div><div class="t" style="left:302.76px;top:1200.21px;font-size:16.72px;font-weight:bold;transform:scaleX(1.1300);">2,00</div><svg class="r" style="left:379px;top:1187px" width="22" height="23" viewBox="0 0 22 23"><defs><linearGradient id="lg" x1="0" y1="0" x2="0" y2="1"><stop offset="0" stop-color="#fbe37a"/><stop offset="1" stop-color="#f2c200"/></linearGradient><radialGradient id="lh" cx=".5" cy=".35" r=".6"><stop offset="0" stop-color="#fff6b8"/><stop offset="1" stop-color="#f4cc20" stop-opacity="0"/></radialGradient></defs><path d="M7.3 9.5V6.2a3.7 3.7 0 0 1 7.4 0V9.5" fill="none" stroke="#7a7a7a" stroke-width="3.6"/><path d="M7.3 9V6.2a3.7 3.7 0 0 1 7.4 0V9" fill="none" stroke="#c4c4c4" stroke-width="1.4"/><rect x="0.5" y="7.5" width="21" height="14.5" rx="1.5" fill="url(#lg)" stroke="#c08c00" stroke-width="1"/><path d="M1 11.3h6M15 11.3h6M1 14.6h6M15 14.6h6M1 17.9h6M15 17.9h6" stroke="#c89000" stroke-width="1.3"/><rect x="6.5" y="8" width="9" height="13.5" fill="url(#lh)"/></svg><div class="t" style="left:552.20px;top:1200.21px;font-size:16.72px;font-weight:bold;transform:scaleX(1.2419);">834/837</div><div class="t" style="left:726.30px;top:1200.21px;font-size:16.72px;font-weight:bold;transform:scaleX(1.0678);">Апт №003 пгт.Барышевка, ул.Киевский шлях,126а</div><div class="t" style="left:1298.00px;top:1200.21px;font-size:16.72px;font-weight:bold;transform:scaleX(1.0509);">БаДМ ТОВ</div><div class="t" style="left:1869.30px;top:1200.21px;font-size:16.72px;font-weight:bold;transform:scaleX(1.0898);">Апт №003 пгт.Барышевка, ул.</div><div class="t" style="left:36.88px;top:1229.21px;font-size:16.72px;font-weight:bold;transform:scaleX(1.1866);">64022</div><div class="t" style="left:144.02px;top:1229.21px;font-size:16.72px;font-weight:bold;transform:scaleX(1.0750);">Склад</div><div class="t" style="left:302.76px;top:1229.21px;font-size:16.72px;font-weight:bold;transform:scaleX(1.1300);">2,00</div><div class="t" style="left:357.50px;top:1229.21px;font-size:16.72px;font-weight:bold;color:#ff7468;transform:scaleX(0.9155);">П</div><div class="t" style="left:552.20px;top:1229.21px;font-size:16.72px;font-weight:bold;transform:scaleX(1.2419);">834/838</div><div class="t" style="left:726.30px;top:1229.21px;font-size:16.72px;font-weight:bold;transform:scaleX(1.0678);">Апт №003 пгт.Барышевка, ул.Киевский шлях,126а</div><div class="t" style="left:1298.00px;top:1229.21px;font-size:16.72px;font-weight:bold;transform:scaleX(1.0300);">Оптима фарм, ЛТД СП</div><div class="t" style="left:1869.30px;top:1229.21px;font-size:16.72px;font-weight:bold;transform:scaleX(1.0898);">Апт №003 пгт.Барышевка, ул.</div><div class="t" style="left:45.80px;top:260.06px;font-size:17.15px;color:#1b1b2b;transform:scaleX(1.0382);">ІД</div><div class="t" style="left:129.50px;top:260.06px;font-size:17.15px;color:#1b1b2b;transform:scaleX(0.9514);">Зона</div><div class="t" style="left:211.00px;top:260.06px;font-size:17.15px;color:#1b1b2b;transform:scaleX(0.9565);">Сума кількостей</div><div class="t" style="left:411.80px;top:260.06px;font-size:17.15px;color:#1b1b2b;transform:scaleX(0.9483);">Заблоковано</div><div class="t" style="left:612.40px;top:260.06px;font-size:17.15px;color:#1b1b2b;transform:scaleX(0.8718);">Номер</div><div class="t" style="left:955.20px;top:260.06px;font-size:17.15px;color:#1b1b2b;transform:scaleX(0.9335);">Фірма-власник</div><div class="t" style="left:1512.90px;top:260.06px;font-size:17.15px;color:#1b1b2b;transform:scaleX(0.9661);">Фірма-контрагент</div><div class="r" style="left:17px;top:245px;width:1px;height:28px;background:#dcdcdc;"></div><div class="r" style="left:93px;top:245px;width:1px;height:28px;background:#dcdcdc;"></div><div class="r" style="left:203px;top:245px;width:1px;height:28px;background:#dcdcdc;"></div><div class="r" style="left:342px;top:245px;width:1px;height:28px;background:#dcdcdc;"></div><div class="r" style="left:372px;top:245px;width:1px;height:28px;background:#dcdcdc;"></div><div class="r" style="left:549px;top:245px;width:1px;height:28px;background:#dcdcdc;"></div><div class="r" style="left:723px;top:245px;width:1px;height:28px;background:#dcdcdc;"></div><div class="r" style="left:1295px;top:245px;width:1px;height:28px;background:#dcdcdc;"></div><div class="r" style="left:1866px;top:245px;width:1px;height:28px;background:#dcdcdc;"></div><div class="t" style="left:2053.00px;top:260.06px;font-size:17.15px;color:#1b1b2b;transform:scaleX(0.9379);">Фірма-вантажоодержувач</div></div></div><svg class="r" style="left:3px;top:251px" width="12" height="16"><g fill="#222"><rect x="0" y="1" width="2" height="2"/><rect x="0" y="6" width="2" height="2"/><rect x="0" y="11" width="2" height="2"/><rect x="4" y="0" width="7" height="2"/><rect x="4" y="3" width="7" height="2"/><rect x="4" y="6" width="7" height="2"/><rect x="4" y="9" width="7" height="2"/><rect x="4" y="12" width="7" height="2"/></g></svg><svg class="r" style="left:5px;top:280px" width="10" height="15"><path d="M1 1l7 6.5-7 6.5" fill="none" stroke="#222" stroke-width="1.5"/><path d="M1 5l3 2.5-3 2.5z" fill="#222"/></svg><div class="r" style="left:0px;top:1223px;width:2134px;height:3px;background:#a2a2a2;"></div><div class="r" style="left:17px;top:1226px;width:1px;height:51px;background:#c8c8c8;"></div><div class="r" style="left:552px;top:1228px;width:171px;height:48px;background:#e6e8e9;border:1px solid #dcdcdc;box-sizing:border-box;"></div><div class="t" style="left:556.50px;top:1252.46px;font-size:17.44px;font-weight:bold;color:#111;transform:scaleX(0.9796);">Запис 1 із 45</div><div class="r" style="left:0px;top:1277px;width:2134px;height:2px;background:#c8c8c8;"></div><div class="r" style="left:26px;top:1281px;width:910px;height:22px;background:#cdcdcd;"></div><svg class="r" style="left:6px;top:1285px" width="12" height="14"><path d="M10 1.5L4 7l6 5.5" fill="none" stroke="#606060" stroke-width="2.6"/></svg><svg class="r" style="left:2116px;top:1285px" width="12" height="14"><path d="M2 1.5L8 7l-6 5.5" fill="none" stroke="#606060" stroke-width="2.6"/></svg><div class="r" style="left:2134px;top:191px;width:25px;height:1089px;background:#f0f0f0;"></div><div class="r" style="left:2134px;top:191px;width:2px;height:1089px;background:#fbfbfb;"></div><div class="r" style="left:2136px;top:217px;width:22px;height:760px;background:#cdcdcd;"></div><svg class="r" style="left:2140px;top:198px" width="14" height="12"><path d="M1.5 10l5.5-6 5.5 6" fill="none" stroke="#606060" stroke-width="2.6"/></svg><svg class="r" style="left:2140px;top:1260px" width="14" height="12"><path d="M1.5 2.5l5.5 6 5.5-6" fill="none" stroke="#606060" stroke-width="2.6"/></svg><div class="r" style="left:5px;top:1308px;width:187px;height:34px;background:#f0f0f0;border:2px solid #1a1a1a;box-sizing:border-box;"></div><div class="t" style="left:9.50px;top:1324.96px;font-size:17.44px;color:#1b1b2b;transform:scaleX(0.9281);">Головна</div><div class="r" style="left:195px;top:1308px;width:187px;height:34px;background:#ffd1a9;border:2px solid #3a8ee6;box-sizing:border-box;"></div><div class="t" style="left:199.00px;top:1324.96px;font-size:17.44px;color:#1b1b2b;transform:scaleX(0.9545);">Список: Заявки пост …</div><div class="r" style="left:0px;top:1344px;width:2159px;height:1px;background:#dadada;"></div><div class="r" style="left:0px;top:1373px;width:2159px;height:2px;background:#1a1a1a;"></div><svg class="r" style="left:4px;top:1350px" width="20" height="23"><defs><linearGradient id="dbg" x1="0" y1="0" x2="1" y2="1"><stop offset="0" stop-color="#e4e4fa"/><stop offset=".5" stop-color="#a8a8d8"/><stop offset="1" stop-color="#5c5a98"/></linearGradient></defs><path d="M1 2.5L4 1H17.5L19 2.5V20L16 22H4L1 19.5Z" fill="url(#dbg)"/><path d="M1.5 8h17v2.2h-17zM1.5 11.2h17v2.2h-17zM1.5 14.4h17v2.2h-17z" fill="#1f74d8" opacity=".9"/><path d="M1.5 10.2h17M1.5 13.4h17" stroke="#8fb8e8" stroke-width=".8"/></svg><div class="t" style="left:30.50px;top:1361.66px;font-size:18.31px;color:#1b1b2b;transform:scaleX(0.8956);">База даних: TASA3@TITAN</div><div class="r" style="left:297px;top:1347px;width:1px;height:26px;background:#d8d8d8;"></div><svg class="r" style="left:303px;top:1350px" width="18" height="23"><circle cx="6.8" cy="6.8" r="5.4" fill="#e8340e"/><path d="M2 22Q1.5 14.5 9.5 14.5Q17.5 14.5 17 22Z" fill="#a4a4e4"/><circle cx="10" cy="8.6" r="4.9" fill="#a8acea"/><ellipse cx="9.6" cy="12.6" rx="2.6" ry="1.4" fill="#eea24c"/><path d="M5 20h9" stroke="#e8e8f8" stroke-width="2" opacity=".6"/></svg><div class="t" style="left:328.70px;top:1361.66px;font-size:18.31px;color:#1b1b2b;transform:scaleX(0.8758);">Користувач: GIFT</div><div class="r" style="left:603px;top:1347px;width:1px;height:26px;background:#d8d8d8;"></div><svg class="r" style="left:606px;top:1349px" width="23" height="24"><path d="M1.5 7.5L5 5.5H13.5L17 2.5L20.5 8V17.5H1.5Z" fill="#a8a8e2"/><path d="M1.5 10.5H20.5V17.5H1.5Z" fill="#7474c0"/><path d="M5.5 6.5h7" stroke="#8a8ad0" stroke-width="1.5"/><path d="M17 2.5L20.5 9" stroke="#505060" stroke-width="1.2"/><path d="M4.5 12L2.5 16.5L4.2 16.5L2.2 21.5L7 15.5L5.3 15.5L7.2 12Z" fill="#f4e070" stroke="#806020" stroke-width=".6"/><path d="M15.5 15L13.5 19.5L15.2 19.5L13.2 24L18 18.5L16.3 18.5L18.2 15Z" fill="#f4e070" stroke="#806020" stroke-width=".6"/></svg><div class="t" style="left:635.00px;top:1361.66px;font-size:18.31px;color:#1b1b2b;">3</div><div class="r" style="left:661px;top:1347px;width:1px;height:26px;background:#d8d8d8;"></div><div class="t" style="left:666.00px;top:1361.66px;font-size:18.31px;color:#1b1b2b;transform:scaleX(0.9043);">Кассовый аппарат не подключен</div><div class="r" style="left:1117px;top:1347px;width:1px;height:26px;background:#d8d8d8;"></div><div class="t" style="left:1122.70px;top:1361.66px;font-size:18.31px;color:#1b1b2b;transform:scaleX(0.8888);">Зона: Склад [1]</div><svg class="r" style="left:0;top:0" width="2159" height="1375"><path d="M77.5 181.8 L96.8 187.2 L92.1 190.6 L516.0 577.9 L515.0 579.1 L87.7 195.4 L85.2 199.8 Z" fill="#ff0000" stroke="#ff0000" stroke-width="1" stroke-linejoin="round"/></svg>
</body></html>
